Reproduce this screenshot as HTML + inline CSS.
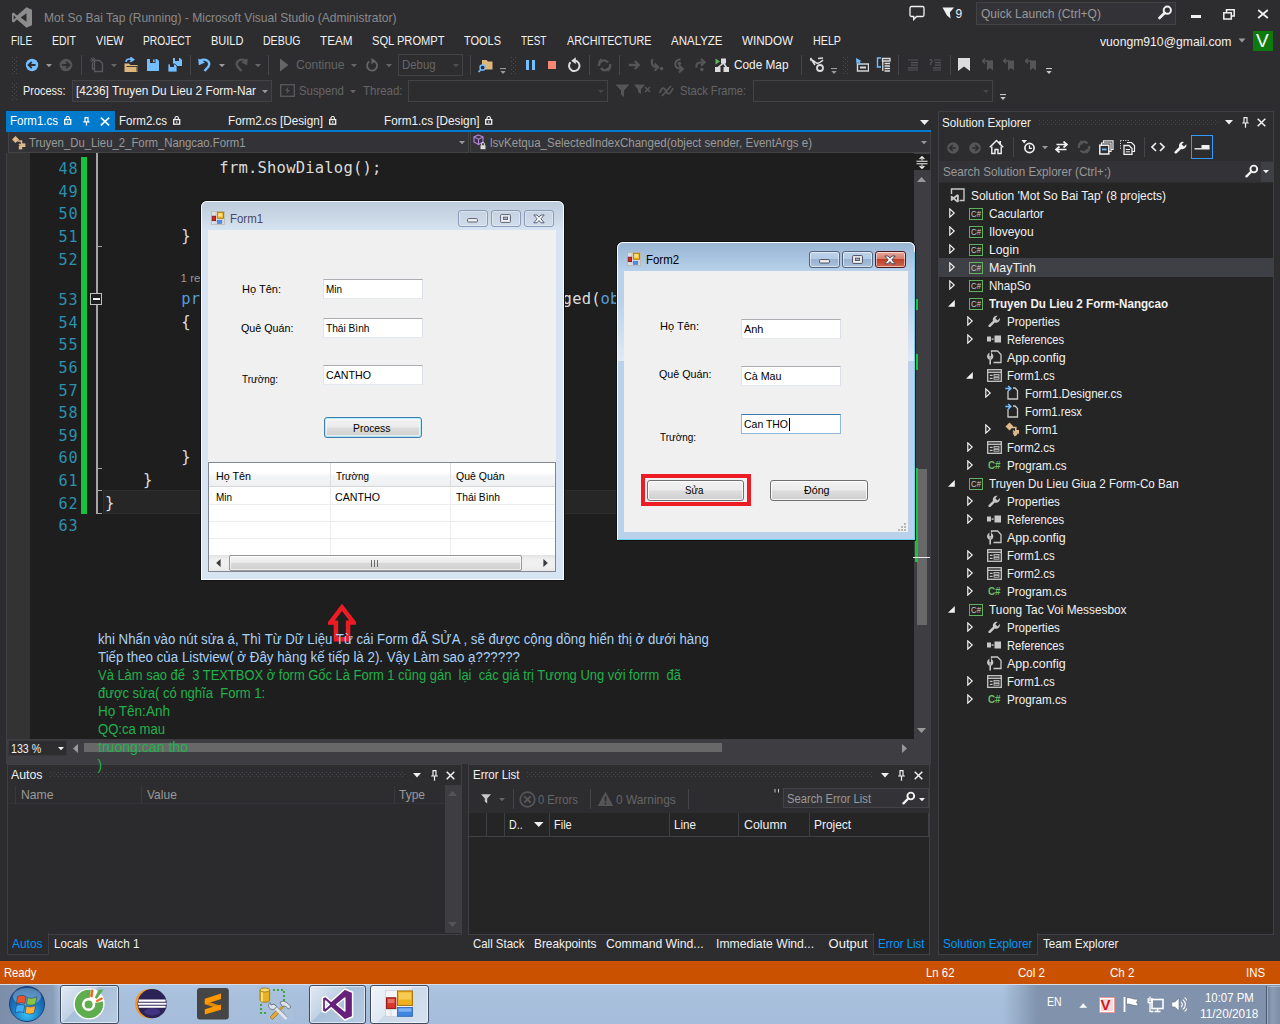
<!DOCTYPE html>
<html><head><meta charset="utf-8"><title>Mot So Bai Tap (Running) - Microsoft Visual Studio (Administrator)</title>
<style>
html,body{margin:0;padding:0;}
body{width:1280px;height:1024px;overflow:hidden;background:#2d2d30;position:relative;font-family:"Liberation Sans",sans-serif;font-size:12px;color:#f1f1f1;}
.r{position:absolute;box-sizing:border-box;display:block;}
.t{position:absolute;white-space:pre;display:block;transform-origin:0 0;}
</style></head><body>
<svg class="r" style="left:12px;top:7px;" width="20.3" height="21" viewBox="0 0 21 21"><path d="M15 0 L21 2.6 V18.4 L15 21 L5.2 12.6 L1.7 15.6 L0 14.6 V6.4 L1.7 5.4 L5.2 8.4 Z M15 6 L9 10.5 L15 15 Z M1.8 8.2 V12.8 L4 10.5 Z" fill="#8c8c8c" fill-rule="evenodd"/></svg>
<span class="t" style="left:44.1px;top:9px;font-size:13.5px;line-height:18px;color:#8a8a8a;transform:scaleX(0.8910);">Mot So Bai Tap (Running) - Microsoft Visual Studio (Administrator)</span>
<svg class="r" style="left:909px;top:5px;" width="16" height="16" viewBox="0 0 16 16"><path d="M2.5 1.5 h11 a1.5 1.5 0 0 1 1.5 1.5 v7 a1.5 1.5 0 0 1 -1.5 1.5 h-6 l-2.8 3 v-3 h-2.2 a1.5 1.5 0 0 1 -1.5 -1.5 v-7 a1.5 1.5 0 0 1 1.5 -1.5z" fill="none" stroke="#f1f1f1" stroke-width="1.3"/></svg>
<svg class="r" style="left:942px;top:7px;" width="13" height="13" viewBox="0 0 13 13"><path d="M0.5 0.5 H12 L7.8 5.5 L8.6 11.5 L5 8.5 Z" fill="#f1f1f1"/></svg>
<span class="t" style="left:955.6px;top:6px;font-size:12px;line-height:16px;color:#f1f1f1;">9</span>
<div class="r" style="left:976px;top:2px;width:200px;height:23px;background:#333337;border:1px solid #434346;"></div>
<span class="t" style="left:981.1px;top:5px;font-size:13px;line-height:17px;color:#999999;transform:scaleX(0.9249);">Quick Launch (Ctrl+Q)</span>
<svg class="r" style="left:1158px;top:5px;" width="15" height="15" viewBox="0 0 15 15"><circle cx="9.3" cy="5.2" r="3.6" fill="none" stroke="#f1f1f1" stroke-width="2"/><path d="M6.8 7.8 L1.5 13" stroke="#f1f1f1" stroke-width="2.6" stroke-linecap="round"/></svg>
<div class="r" style="left:1190.5px;top:14.5px;width:10px;height:3.5px;background:#f1f1f1;"></div>
<svg class="r" style="left:1223px;top:9px;" width="12" height="11" viewBox="0 0 12 11"><path d="M3.5 3 V0.8 H11.2 V7 H8.5" fill="none" stroke="#f1f1f1" stroke-width="1.5"/><rect x="0.8" y="3.8" width="7.5" height="6.2" fill="none" stroke="#f1f1f1" stroke-width="1.5"/></svg>
<svg class="r" style="left:1257px;top:9px;" width="12" height="10" viewBox="0 0 12 10"><path d="M1.2 1 L10.8 9 M10.8 1 L1.2 9" stroke="#f1f1f1" stroke-width="1.7"/></svg>
<span class="t" style="left:11.1px;top:33px;font-size:12.5px;line-height:16px;color:#f1f1f1;transform:scaleX(0.7962);">FILE</span>
<span class="t" style="left:51.6px;top:33px;font-size:12.5px;line-height:16px;color:#f1f1f1;transform:scaleX(0.8421);">EDIT</span>
<span class="t" style="left:95.6px;top:33px;font-size:12.5px;line-height:16px;color:#f1f1f1;transform:scaleX(0.8594);">VIEW</span>
<span class="t" style="left:142.6px;top:33px;font-size:12.5px;line-height:16px;color:#f1f1f1;transform:scaleX(0.8223);">PROJECT</span>
<span class="t" style="left:210.6px;top:33px;font-size:12.5px;line-height:16px;color:#f1f1f1;transform:scaleX(0.8814);">BUILD</span>
<span class="t" style="left:262.6px;top:33px;font-size:12.5px;line-height:16px;color:#f1f1f1;transform:scaleX(0.8427);">DEBUG</span>
<span class="t" style="left:319.6px;top:33px;font-size:12.5px;line-height:16px;color:#f1f1f1;transform:scaleX(0.9353);">TEAM</span>
<span class="t" style="left:371.6px;top:33px;font-size:12.5px;line-height:16px;color:#f1f1f1;transform:scaleX(0.8896);">SQL PROMPT</span>
<span class="t" style="left:464.1px;top:33px;font-size:12.5px;line-height:16px;color:#f1f1f1;transform:scaleX(0.8783);">TOOLS</span>
<span class="t" style="left:520.6px;top:33px;font-size:12.5px;line-height:16px;color:#f1f1f1;transform:scaleX(0.7969);">TEST</span>
<span class="t" style="left:566.6px;top:33px;font-size:12.5px;line-height:16px;color:#f1f1f1;transform:scaleX(0.8633);">ARCHITECTURE</span>
<span class="t" style="left:670.6px;top:33px;font-size:12.5px;line-height:16px;color:#f1f1f1;transform:scaleX(0.9196);">ANALYZE</span>
<span class="t" style="left:742.1px;top:33px;font-size:12.5px;line-height:16px;color:#f1f1f1;transform:scaleX(0.9294);">WINDOW</span>
<span class="t" style="left:812.6px;top:33px;font-size:12.5px;line-height:16px;color:#f1f1f1;transform:scaleX(0.8582);">HELP</span>
<span class="t" style="left:1099.6px;top:33.7px;font-size:13px;line-height:16px;color:#f1f1f1;transform:scaleX(0.9368);">vuongm910@gmail.com</span>
<svg class="r" style="left:1238px;top:38px;" width="8" height="5" viewBox="0 0 8 5"><path d="M0.5 0.5 H7.5 L4 4.5Z" fill="#999"/></svg>
<div class="r" style="left:1253px;top:31px;width:20px;height:20px;background:#0e7a0d;"></div>
<span class="t" style="left:1256.1px;top:31px;font-size:19px;line-height:20px;color:#ffffff;">V</span>
<svg class="r" style="left:12px;top:56.5px;" width="5" height="17" viewBox="0 0 5 17"><rect x="0" y="0" width="1" height="1" fill="#4b4b50"/><rect x="4" y="0" width="1" height="1" fill="#4b4b50"/><rect x="2" y="2" width="1" height="1" fill="#4b4b50"/><rect x="0" y="4" width="1" height="1" fill="#4b4b50"/><rect x="4" y="4" width="1" height="1" fill="#4b4b50"/><rect x="2" y="6" width="1" height="1" fill="#4b4b50"/><rect x="0" y="8" width="1" height="1" fill="#4b4b50"/><rect x="4" y="8" width="1" height="1" fill="#4b4b50"/><rect x="2" y="10" width="1" height="1" fill="#4b4b50"/><rect x="0" y="12" width="1" height="1" fill="#4b4b50"/><rect x="4" y="12" width="1" height="1" fill="#4b4b50"/><rect x="2" y="14" width="1" height="1" fill="#4b4b50"/><rect x="0" y="16" width="1" height="1" fill="#4b4b50"/><rect x="4" y="16" width="1" height="1" fill="#4b4b50"/></svg>
<svg class="r" style="left:12px;top:82.5px;" width="5" height="17" viewBox="0 0 5 17"><rect x="0" y="0" width="1" height="1" fill="#4b4b50"/><rect x="4" y="0" width="1" height="1" fill="#4b4b50"/><rect x="2" y="2" width="1" height="1" fill="#4b4b50"/><rect x="0" y="4" width="1" height="1" fill="#4b4b50"/><rect x="4" y="4" width="1" height="1" fill="#4b4b50"/><rect x="2" y="6" width="1" height="1" fill="#4b4b50"/><rect x="0" y="8" width="1" height="1" fill="#4b4b50"/><rect x="4" y="8" width="1" height="1" fill="#4b4b50"/><rect x="2" y="10" width="1" height="1" fill="#4b4b50"/><rect x="0" y="12" width="1" height="1" fill="#4b4b50"/><rect x="4" y="12" width="1" height="1" fill="#4b4b50"/><rect x="2" y="14" width="1" height="1" fill="#4b4b50"/><rect x="0" y="16" width="1" height="1" fill="#4b4b50"/><rect x="4" y="16" width="1" height="1" fill="#4b4b50"/></svg>
<svg class="r" style="left:25px;top:58px;" width="14" height="14" viewBox="0 0 14 14"><circle cx="7" cy="7" r="6.2" fill="#75beff"/><path d="M10.6 7 H4 M6.8 3.8 L3.6 7 L6.8 10.2" stroke="#2d2d30" stroke-width="1.9" fill="none"/></svg>
<svg class="r" style="left:46px;top:63.5px;" width="6" height="3.5" viewBox="0 0 6 3.5"><path d="M0 0 H6 L3 3.3Z" fill="#999"/></svg>
<svg class="r" style="left:59px;top:58px;" width="14" height="14" viewBox="0 0 14 14"><circle cx="7" cy="7" r="6.3" fill="#555558"/><path d="M3 7 H10 M7.2 3.8 L10.4 7 L7.2 10.2" stroke="#2d2d30" stroke-width="1.9" fill="none"/></svg>
<div class="r" style="left:81px;top:55px;width:1px;height:20px;background:#46464a;"></div>
<svg class="r" style="left:90px;top:57px;" width="14" height="16" viewBox="0 0 14 16"><path d="M4.5 3.5 H9.5 L12.5 6.5 V14.5 H4.5 Z M2.5 6 V12 H4" fill="none" stroke="#5a5a5e" stroke-width="1.3"/><path d="M1 1 L5 5 M5 1 L1 5 M3 0 V6 M0 3 H6" stroke="#5a5a5e" stroke-width="0.9"/></svg>
<svg class="r" style="left:111px;top:63.5px;" width="6" height="3.5" viewBox="0 0 6 3.5"><path d="M0 0 H6 L3 3.3Z" fill="#656565"/></svg>
<svg class="r" style="left:123px;top:57px;" width="16" height="16" viewBox="0 0 16 16"><path d="M1.5 6.5 H6 L7.5 8 H14.5 V15 H1.5 Z" fill="#dcb67a"/><path d="M3.5 9.5 H14 V14.5" fill="none" stroke="#2d2d30" stroke-width="0.9"/><path d="M3 5 C3 2 6 1.5 9 2.5 M7.5 0.3 L10.5 2.7 L7.2 4.8" fill="none" stroke="#75beff" stroke-width="1.7"/></svg>
<svg class="r" style="left:146px;top:58px;" width="14" height="14" viewBox="0 0 14 14"><path d="M1 1 H11 L13 3 V13 H1 Z" fill="#75beff"/><rect x="4" y="1" width="5.5" height="4" fill="#2d2d30"/><rect x="7" y="1.6" width="1.6" height="2.6" fill="#75beff"/></svg>
<svg class="r" style="left:167px;top:57px;" width="16" height="16" viewBox="0 0 16 16"><path d="M6 1 H13 L15 3 V9 H6 Z" fill="#75beff"/><rect x="8" y="1" width="4" height="3" fill="#2d2d30"/><path d="M1 7 H8 L10 9 V15 H1 Z" fill="#75beff" stroke="#2d2d30" stroke-width="0.8"/><rect x="3" y="7" width="4" height="3" fill="#2d2d30"/></svg>
<div class="r" style="left:190px;top:55px;width:1px;height:20px;background:#46464a;"></div>
<svg class="r" style="left:197px;top:57px;" width="16" height="16" viewBox="0 0 16 16"><path d="M3 3.5 C9 1 14 4.5 11.5 9.5 L7.5 14" fill="none" stroke="#75beff" stroke-width="2.4"/><path d="M1.2 1.5 L1.8 8.2 L8 5.6Z" fill="#75beff"/></svg>
<svg class="r" style="left:219px;top:63.5px;" width="6" height="3.5" viewBox="0 0 6 3.5"><path d="M0 0 H6 L3 3.3Z" fill="#999"/></svg>
<svg class="r" style="left:233px;top:57px;" width="16" height="16" viewBox="0 0 16 16"><path d="M13 3.5 C7 1 2 4.5 4.5 9.5 L8.5 14" fill="none" stroke="#555558" stroke-width="2.4"/><path d="M14.8 1.5 L14.2 8.2 L8 5.6Z" fill="#555558"/></svg>
<svg class="r" style="left:255px;top:63.5px;" width="6" height="3.5" viewBox="0 0 6 3.5"><path d="M0 0 H6 L3 3.3Z" fill="#656565"/></svg>
<div class="r" style="left:268px;top:55px;width:1px;height:20px;background:#46464a;"></div>
<svg class="r" style="left:279px;top:58px;" width="10" height="14" viewBox="0 0 10 14"><path d="M1 0.5 V13.5 L9.5 7Z" fill="#656565"/></svg>
<span class="t" style="left:296.1px;top:57px;font-size:13px;line-height:16px;color:#656565;transform:scaleX(0.9327);">Continue</span>
<svg class="r" style="left:351px;top:63.5px;" width="6" height="3.5" viewBox="0 0 6 3.5"><path d="M0 0 H6 L3 3.3Z" fill="#656565"/></svg>
<svg class="r" style="left:365px;top:58px;" width="14" height="15" viewBox="0 0 14 15"><path d="M9.5 3.2 A5 5 0 1 1 4.2 3.5" fill="none" stroke="#656565" stroke-width="1.8"/><path d="M6.3 0 L10.8 3 L6.6 6.2Z" fill="#656565"/></svg>
<svg class="r" style="left:386px;top:63.5px;" width="6" height="3.5" viewBox="0 0 6 3.5"><path d="M0 0 H6 L3 3.3Z" fill="#656565"/></svg>
<div class="r" style="left:398px;top:54px;width:65px;height:22px;background:#2d2d30;border:1px solid #434346;"></div>
<span class="t" style="left:402.1px;top:57px;font-size:13px;line-height:16px;color:#656565;transform:scaleX(0.8758);">Debug</span>
<svg class="r" style="left:453px;top:63.5px;" width="6" height="3.5" viewBox="0 0 6 3.5"><path d="M0 0 H6 L3 3.3Z" fill="#505054"/></svg>
<div class="r" style="left:470px;top:55px;width:1px;height:20px;background:#46464a;"></div>
<svg class="r" style="left:478px;top:57px;" width="15" height="16" viewBox="0 0 15 16"><path d="M4 3 H8.5 L10 4.5 H14.5 V12.5 H4 Z" fill="#dcb67a"/><circle cx="4.6" cy="10.6" r="2.6" fill="#2d2d30" stroke="#75beff" stroke-width="1.4"/><path d="M2.8 12.6 L0.6 15" stroke="#75beff" stroke-width="1.6"/></svg>
<svg class="r" style="left:500px;top:68px;" width="6" height="7" viewBox="0 0 6 7"><rect x="0" y="0" width="6" height="1.1" fill="#999"/><path d="M0.3 3 H5.7 L3 6Z" fill="#999"/></svg>
<svg class="r" style="left:511px;top:56.5px;" width="5" height="17" viewBox="0 0 5 17"><rect x="0" y="0" width="1" height="1" fill="#4b4b50"/><rect x="4" y="0" width="1" height="1" fill="#4b4b50"/><rect x="2" y="2" width="1" height="1" fill="#4b4b50"/><rect x="0" y="4" width="1" height="1" fill="#4b4b50"/><rect x="4" y="4" width="1" height="1" fill="#4b4b50"/><rect x="2" y="6" width="1" height="1" fill="#4b4b50"/><rect x="0" y="8" width="1" height="1" fill="#4b4b50"/><rect x="4" y="8" width="1" height="1" fill="#4b4b50"/><rect x="2" y="10" width="1" height="1" fill="#4b4b50"/><rect x="0" y="12" width="1" height="1" fill="#4b4b50"/><rect x="4" y="12" width="1" height="1" fill="#4b4b50"/><rect x="2" y="14" width="1" height="1" fill="#4b4b50"/><rect x="0" y="16" width="1" height="1" fill="#4b4b50"/><rect x="4" y="16" width="1" height="1" fill="#4b4b50"/></svg>
<div class="r" style="left:525.5px;top:60px;width:3px;height:9.5px;background:#75beff;"></div>
<div class="r" style="left:531.5px;top:60px;width:3px;height:9.5px;background:#75beff;"></div>
<div class="r" style="left:548px;top:61px;width:8px;height:8px;background:#f48771;"></div>
<svg class="r" style="left:567px;top:57px;" width="14" height="16" viewBox="0 0 14 16"><path d="M3.5 5.2 A5.2 5.2 0 1 0 7.5 3.6" fill="none" stroke="#dcdcdc" stroke-width="2"/><path d="M8.8 0.3 L4.2 3.8 L8.8 7Z" fill="#dcdcdc"/></svg>
<div class="r" style="left:589px;top:55px;width:1px;height:20px;background:#46464a;"></div>
<svg class="r" style="left:597px;top:58px;" width="15" height="14" viewBox="0 0 15 14"><path d="M2 8 A5 5 0 0 1 11 4.5 M13 6 A5 5 0 0 1 4 10" fill="none" stroke="#555558" stroke-width="2.4"/><path d="M4 0 L1 4 H6Z M11 14 L14 10 H9Z" fill="#555558"/></svg>
<div class="r" style="left:619px;top:55px;width:1px;height:20px;background:#46464a;"></div>
<svg class="r" style="left:627.5px;top:59px;" width="13" height="12" viewBox="0 0 13 12"><path d="M0.8 6 H10.6 M6.8 2 L10.8 6 L6.8 10" fill="none" stroke="#555558" stroke-width="2.3"/></svg>
<svg class="r" style="left:648.5px;top:58px;" width="15" height="14" viewBox="0 0 15 14"><path d="M3.5 1 C1.5 6 3.5 9.2 8.6 9.2 M5.6 5.6 L9.2 9.2 L5.6 12.6" fill="none" stroke="#555558" stroke-width="2.1"/><circle cx="12.6" cy="10.6" r="1.8" fill="#555558"/></svg>
<svg class="r" style="left:672.5px;top:58px;" width="13" height="15" viewBox="0 0 13 15"><path d="M7.5 1.2 C0.5 2 0.5 11 8 11 M6 7.6 L9.8 11 L6 14.4" fill="none" stroke="#555558" stroke-width="2.1"/><circle cx="6.4" cy="5.6" r="1.8" fill="#555558"/></svg>
<svg class="r" style="left:693.5px;top:58px;" width="13" height="14" viewBox="0 0 13 14"><path d="M2.6 9.6 C1.6 5 4.5 4.2 10 4.2 M7 0.8 L10.6 4.2 L7 7.8" fill="none" stroke="#555558" stroke-width="2.1"/><circle cx="7.8" cy="11.6" r="1.8" fill="#555558"/></svg>
<svg class="r" style="left:714px;top:57px;" width="16" height="16" viewBox="0 0 16 16"><path d="M1.5 1.5 L6 4.5 L1.5 7.5Z" fill="#5cb85c"/><rect x="7" y="1.5" width="5" height="5" fill="#dcdcdc"/><rect x="1" y="10" width="5.5" height="5" fill="#dcdcdc"/><rect x="9.5" y="10" width="5.5" height="5" fill="#dcdcdc"/><path d="M9.5 6 L4 10.5 M9.5 6 L12.5 10.5" stroke="#dcdcdc" stroke-width="1.6"/></svg>
<span class="t" style="left:734.1px;top:57px;font-size:13px;line-height:16px;color:#f1f1f1;transform:scaleX(0.9083);">Code Map</span>
<div class="r" style="left:801px;top:55px;width:1px;height:20px;background:#46464a;"></div>
<svg class="r" style="left:809px;top:57px;" width="16" height="16" viewBox="0 0 16 16"><path d="M1 3 C4 2 5 5 7.5 6 S12 5 14 3 M1.5 1 L6 8 M9 1.5 L14 1" fill="none" stroke="#dcdcdc" stroke-width="1.6"/><circle cx="11" cy="11" r="3" fill="none" stroke="#dcdcdc" stroke-width="1.8"/></svg>
<svg class="r" style="left:830.5px;top:68px;" width="6" height="7" viewBox="0 0 6 7"><rect x="0" y="0" width="6" height="1.1" fill="#999"/><path d="M0.3 3 H5.7 L3 6Z" fill="#999"/></svg>
<svg class="r" style="left:843px;top:56.5px;" width="5" height="17" viewBox="0 0 5 17"><rect x="0" y="0" width="1" height="1" fill="#4b4b50"/><rect x="4" y="0" width="1" height="1" fill="#4b4b50"/><rect x="2" y="2" width="1" height="1" fill="#4b4b50"/><rect x="0" y="4" width="1" height="1" fill="#4b4b50"/><rect x="4" y="4" width="1" height="1" fill="#4b4b50"/><rect x="2" y="6" width="1" height="1" fill="#4b4b50"/><rect x="0" y="8" width="1" height="1" fill="#4b4b50"/><rect x="4" y="8" width="1" height="1" fill="#4b4b50"/><rect x="2" y="10" width="1" height="1" fill="#4b4b50"/><rect x="0" y="12" width="1" height="1" fill="#4b4b50"/><rect x="4" y="12" width="1" height="1" fill="#4b4b50"/><rect x="2" y="14" width="1" height="1" fill="#4b4b50"/><rect x="0" y="16" width="1" height="1" fill="#4b4b50"/><rect x="4" y="16" width="1" height="1" fill="#4b4b50"/></svg>
<svg class="r" style="left:855px;top:57px;" width="14" height="15" viewBox="0 0 14 15"><rect x="2.5" y="7" width="11" height="7" fill="none" stroke="#dcdcdc" stroke-width="1.4"/><rect x="5" y="9.5" width="6" height="2" fill="#dcdcdc"/><path d="M1 1 L1.5 7 L3.2 5.3 L5 8 L6.3 7.2 L4.6 4.6 L6.8 4.2Z" fill="#75beff"/></svg>
<svg class="r" style="left:876px;top:57px;" width="15" height="15" viewBox="0 0 15 15"><path d="M5 1 H1.5 V10 H5" fill="none" stroke="#75beff" stroke-width="1.4"/><path d="M6.5 1.5 H14 V4 H6.5Z M8.5 6.5 H14 M8.5 9 H14 M8.5 11.5 H14 M8.5 14 H14 M6.8 4 V14" fill="none" stroke="#dcdcdc" stroke-width="1.3"/></svg>
<div class="r" style="left:898px;top:55px;width:1px;height:20px;background:#46464a;"></div>
<svg class="r" style="left:907px;top:59px;" width="12" height="12" viewBox="0 0 12 12"><path d="M1 1 H11 M4 3.6 H11 M4 6.2 H11 M1 8.8 H11 M1 11 H11" stroke="#555558" stroke-width="1.2"/></svg>
<svg class="r" style="left:929px;top:59px;" width="13" height="12" viewBox="0 0 13 12"><path d="M5 1 H12 M6 3.6 H12 M6 6.2 H12 M4 8.8 H12 M4 11 H12" stroke="#555558" stroke-width="1.2"/><path d="M0.5 1 C3 0 4 2 1.5 4.5 V6" fill="none" stroke="#555558" stroke-width="1.3"/></svg>
<div class="r" style="left:950px;top:55px;width:1px;height:20px;background:#46464a;"></div>
<svg class="r" style="left:958px;top:58px;" width="12" height="13" viewBox="0 0 12 13"><path d="M0 0 H12 V13 L6 8.5 L0 13Z" fill="#dcdcdc"/></svg>
<svg class="r" style="left:982px;top:58px;" width="13" height="13" viewBox="0 0 13 13"><path d="M5 2.5 H11 V12.5 L8 10 L5 12.5Z" fill="#555558"/><path d="M0 3 H6 M3 0.5 L0.5 3 L3 5.5" fill="none" stroke="#555558" stroke-width="1.5"/></svg>
<svg class="r" style="left:1003px;top:58px;" width="13" height="13" viewBox="0 0 13 13"><path d="M5 2.5 H11 V12.5 L8 10 L5 12.5Z" fill="#555558"/><path d="M0 3 H6 M3 0.5 L0.5 3 L3 5.5" fill="none" stroke="#555558" stroke-width="1.5"/></svg>
<svg class="r" style="left:1025px;top:58px;" width="13" height="13" viewBox="0 0 13 13"><path d="M5 2.5 H11 V12.5 L8 10 L5 12.5Z" fill="#555558"/><path d="M0 3 H6 M3 0.5 L0.5 3 L3 5.5" fill="none" stroke="#555558" stroke-width="1.5"/></svg>
<svg class="r" style="left:1046px;top:68px;" width="6" height="7" viewBox="0 0 6 7"><rect x="0" y="0" width="6" height="1.1" fill="#c8c8c8"/><path d="M0.3 3 H5.7 L3 6Z" fill="#c8c8c8"/></svg>
<span class="t" style="left:23.1px;top:83px;font-size:13px;line-height:16px;color:#f1f1f1;transform:scaleX(0.8395);">Process:</span>
<div class="r" style="left:72px;top:80px;width:200px;height:22px;background:#333337;border:1px solid #434346;"></div>
<span class="t" style="left:76.1px;top:83px;font-size:13px;line-height:16px;color:#f1f1f1;transform:scaleX(0.9091);">[4236] Truyen Du Lieu 2 Form-Nar</span>
<svg class="r" style="left:261.5px;top:89.5px;" width="6" height="3.5" viewBox="0 0 6 3.5"><path d="M0 0 H6 L3 3.3Z" fill="#999"/></svg>
<svg class="r" style="left:280px;top:84px;" width="15" height="13" viewBox="0 0 15 13"><rect x="0.7" y="0.7" width="13.6" height="11.6" fill="none" stroke="#5a5a5e" stroke-width="1.3"/><path d="M8.5 2.5 L5 6.8 H7.5 L6 10.5 L10 6 H7.5Z" fill="#5a5a5e"/></svg>
<span class="t" style="left:299.1px;top:83px;font-size:13px;line-height:16px;color:#656565;transform:scaleX(0.8759);">Suspend</span>
<svg class="r" style="left:349.5px;top:89.5px;" width="6" height="3.5" viewBox="0 0 6 3.5"><path d="M0 0 H6 L3 3.3Z" fill="#656565"/></svg>
<span class="t" style="left:362.6px;top:83px;font-size:13px;line-height:16px;color:#656565;transform:scaleX(0.8827);">Thread:</span>
<div class="r" style="left:408px;top:80px;width:200px;height:22px;background:#2d2d30;border:1px solid #434346;"></div>
<svg class="r" style="left:597.5px;top:89.5px;" width="6" height="3.5" viewBox="0 0 6 3.5"><path d="M0 0 H6 L3 3.3Z" fill="#46464a"/></svg>
<svg class="r" style="left:615px;top:84px;" width="15" height="14" viewBox="0 0 15 14"><path d="M0.5 0.5 H14.5 L9 6.5 V13 L6 10.5 V6.5Z" fill="#555558"/></svg>
<svg class="r" style="left:634px;top:84px;" width="18" height="14" viewBox="0 0 18 14"><path d="M0 0.5 H11 L7 5.5 V10 L4 8 V5.5Z" fill="#555558"/><path d="M11 3 L16 8 M11 8 L16 3" stroke="#555558" stroke-width="1.6"/></svg>
<svg class="r" style="left:659px;top:85px;" width="15" height="12" viewBox="0 0 15 12"><path d="M0.5 8 C3 2 5 2 7 6 S11 10 14 3 M3 11 L12 1" fill="none" stroke="#555558" stroke-width="1.8"/></svg>
<span class="t" style="left:680.1px;top:83px;font-size:13px;line-height:16px;color:#656565;transform:scaleX(0.8544);">Stack Frame:</span>
<div class="r" style="left:753px;top:80px;width:240px;height:22px;background:#2d2d30;border:1px solid #434346;"></div>
<svg class="r" style="left:983px;top:89.5px;" width="6" height="3.5" viewBox="0 0 6 3.5"><path d="M0 0 H6 L3 3.3Z" fill="#46464a"/></svg>
<svg class="r" style="left:1000px;top:94px;" width="6" height="7" viewBox="0 0 6 7"><rect x="0" y="0" width="6" height="1.1" fill="#c8c8c8"/><path d="M0.3 3 H5.7 L3 6Z" fill="#c8c8c8"/></svg>
<div class="r" style="left:6px;top:111px;width:109px;height:20px;background:#007acc;"></div>
<div class="r" style="left:6px;top:130px;width:925px;height:2px;background:#007acc;"></div>
<span class="t" style="left:10.1px;top:113px;font-size:13px;line-height:16px;color:#ffffff;transform:scaleX(0.8868);">Form1.cs</span>
<svg class="r" style="left:64px;top:116px;" width="7.5" height="9" viewBox="0 0 7.5 9"><rect x="0.7" y="3.6" width="6" height="4.6" fill="none" stroke="#ffffff" stroke-width="1.3"/><path d="M2 3.4 V2 A1.7 1.5 0 0 1 5.4 2 V3.4" fill="none" stroke="#ffffff" stroke-width="1.1"/><rect x="3.2" y="5.2" width="1.1" height="1.6" fill="#ffffff"/></svg>
<svg class="r" style="left:83px;top:117px;" width="7" height="9" viewBox="0 0 7 9"><path d="M1.5 0.6 H5.5 M2 0.6 V4.6 M5 0.6 V4.6 M0.3 4.8 H6.7 M3.5 4.9 V8.4" stroke="#fff" stroke-width="1.2" fill="none"/></svg>
<svg class="r" style="left:100px;top:116.5px;" width="10" height="9" viewBox="0 0 10 9"><path d="M0.8 0.6 L9.2 8.4 M9.2 0.6 L0.8 8.4" stroke="#fff" stroke-width="1.5"/></svg>
<span class="t" style="left:119.1px;top:113px;font-size:13px;line-height:16px;color:#f1f1f1;transform:scaleX(0.8868);">Form2.cs</span>
<svg class="r" style="left:173px;top:116px;" width="7.5" height="9" viewBox="0 0 7.5 9"><rect x="0.7" y="3.6" width="6" height="4.6" fill="none" stroke="#f1f1f1" stroke-width="1.3"/><path d="M2 3.4 V2 A1.7 1.5 0 0 1 5.4 2 V3.4" fill="none" stroke="#f1f1f1" stroke-width="1.1"/><rect x="3.2" y="5.2" width="1.1" height="1.6" fill="#f1f1f1"/></svg>
<span class="t" style="left:227.6px;top:113px;font-size:13px;line-height:16px;color:#f1f1f1;transform:scaleX(0.9005);">Form2.cs [Design]</span>
<svg class="r" style="left:329px;top:116px;" width="7.5" height="9" viewBox="0 0 7.5 9"><rect x="0.7" y="3.6" width="6" height="4.6" fill="none" stroke="#f1f1f1" stroke-width="1.3"/><path d="M2 3.4 V2 A1.7 1.5 0 0 1 5.4 2 V3.4" fill="none" stroke="#f1f1f1" stroke-width="1.1"/><rect x="3.2" y="5.2" width="1.1" height="1.6" fill="#f1f1f1"/></svg>
<span class="t" style="left:383.6px;top:113px;font-size:13px;line-height:16px;color:#f1f1f1;transform:scaleX(0.9052);">Form1.cs [Design]</span>
<svg class="r" style="left:485px;top:116px;" width="7.5" height="9" viewBox="0 0 7.5 9"><rect x="0.7" y="3.6" width="6" height="4.6" fill="none" stroke="#f1f1f1" stroke-width="1.3"/><path d="M2 3.4 V2 A1.7 1.5 0 0 1 5.4 2 V3.4" fill="none" stroke="#f1f1f1" stroke-width="1.1"/><rect x="3.2" y="5.2" width="1.1" height="1.6" fill="#f1f1f1"/></svg>
<svg class="r" style="left:919.5px;top:119.5px;" width="9" height="5" viewBox="0 0 9 5"><path d="M0 0 H9 L4.5 5Z" fill="#f1f1f1"/></svg>
<div class="r" style="left:8px;top:132px;width:461px;height:21px;background:#333337;border:1px solid #434346;border-top:0;"></div>
<div class="r" style="left:470px;top:132px;width:461px;height:21px;background:#333337;border:1px solid #434346;border-top:0;"></div>
<svg class="r" style="left:11px;top:135px;" width="15" height="15" viewBox="0 0 15 15"><path d="M1 4.5 L4.5 1 L8 4.5 L4.5 8Z" fill="#e0b98a"/><path d="M6.5 6 H10.5 V11 H13 M8 9 L10.5 11.5" fill="none" stroke="#e0b98a" stroke-width="1.6"/><rect x="10.8" y="8.4" width="3.6" height="3.6" fill="#e0b98a"/><rect x="7.8" y="11" width="3.4" height="3.4" fill="#e0b98a"/></svg>
<span class="t" style="left:28.6px;top:135px;font-size:12.5px;line-height:16px;color:#999999;transform:scaleX(0.9078);">Truyen_Du_Lieu_2_Form_Nangcao.Form1</span>
<svg class="r" style="left:459px;top:141px;" width="6" height="3.5" viewBox="0 0 6 3.5"><path d="M0 0 H6 L3 3.3Z" fill="#999"/></svg>
<svg class="r" style="left:473px;top:134px;" width="14" height="16" viewBox="0 0 14 16"><path d="M5.5 1 L10 3 V8 L5.5 10.5 L1 8 V3Z M1 3 L5.5 5.2 L10 3 M5.5 5.2 V10.5" fill="none" stroke="#b180d7" stroke-width="1.2"/><rect x="7.5" y="11.2" width="5" height="4" fill="#dcdcdc"/><path d="M8.6 11 V9.8 A1.4 1.2 0 0 1 11.4 9.8 V11" fill="none" stroke="#dcdcdc" stroke-width="1"/></svg>
<span class="t" style="left:490.1px;top:135px;font-size:12.5px;line-height:16px;color:#999999;transform:scaleX(0.9213);">lsvKetqua_SelectedIndexChanged(object sender, EventArgs e)</span>
<svg class="r" style="left:921px;top:141px;" width="6" height="3.5" viewBox="0 0 6 3.5"><path d="M0 0 H6 L3 3.3Z" fill="#999"/></svg>
<div class="r" style="left:6px;top:153px;width:1px;height:611px;background:#3f3f46;"></div>
<div class="r" style="left:7px;top:153px;width:23px;height:585.5px;background:#333333;"></div>
<div class="r" style="left:30px;top:153px;width:884px;height:585.5px;background:#1e1e1e;"></div>
<div class="r" style="left:103px;top:490px;width:811px;height:23.5px;background:#262626;border:1px solid #2e2e2e;"></div>
<div class="r" style="left:80.5px;top:157px;width:6.7px;height:357px;background:#17c33c;"></div>
<div class="r" style="left:96.3px;top:153px;width:1.5px;height:361px;background:#a5a5a5;"></div>
<div class="r" style="left:96.3px;top:246px;width:6px;height:1.3px;background:#a5a5a5;"></div>
<div class="r" style="left:96.3px;top:468px;width:6px;height:1.3px;background:#a5a5a5;"></div>
<div class="r" style="left:96.3px;top:490px;width:6px;height:1.3px;background:#a5a5a5;"></div>
<div class="r" style="left:96.3px;top:513px;width:6px;height:1.3px;background:#a5a5a5;"></div>
<div class="r" style="left:90.3px;top:293px;width:12px;height:12px;background:#1e1e1e;border:1.3px solid #c0c0c0;"></div>
<div class="r" style="left:93px;top:298.3px;width:7px;height:2px;background:#f1f1f1;"></div>
<span class="t" style="left:58.5px;top:158.2px;font-size:15.2px;line-height:22px;color:#2b91af;letter-spacing:0.759px;font-family:'DejaVu Sans Mono','Liberation Mono',monospace;">48</span>
<span class="t" style="left:58.5px;top:180.8px;font-size:15.2px;line-height:22px;color:#2b91af;letter-spacing:0.759px;font-family:'DejaVu Sans Mono','Liberation Mono',monospace;">49</span>
<span class="t" style="left:58.5px;top:203.4px;font-size:15.2px;line-height:22px;color:#2b91af;letter-spacing:0.759px;font-family:'DejaVu Sans Mono','Liberation Mono',monospace;">50</span>
<span class="t" style="left:58.5px;top:226px;font-size:15.2px;line-height:22px;color:#2b91af;letter-spacing:0.759px;font-family:'DejaVu Sans Mono','Liberation Mono',monospace;">51</span>
<span class="t" style="left:58.5px;top:248.6px;font-size:15.2px;line-height:22px;color:#2b91af;letter-spacing:0.759px;font-family:'DejaVu Sans Mono','Liberation Mono',monospace;">52</span>
<span class="t" style="left:58.5px;top:289.2px;font-size:15.2px;line-height:22px;color:#2b91af;letter-spacing:0.759px;font-family:'DejaVu Sans Mono','Liberation Mono',monospace;">53</span>
<span class="t" style="left:58.5px;top:311.8px;font-size:15.2px;line-height:22px;color:#2b91af;letter-spacing:0.759px;font-family:'DejaVu Sans Mono','Liberation Mono',monospace;">54</span>
<span class="t" style="left:58.5px;top:334.4px;font-size:15.2px;line-height:22px;color:#2b91af;letter-spacing:0.759px;font-family:'DejaVu Sans Mono','Liberation Mono',monospace;">55</span>
<span class="t" style="left:58.5px;top:357px;font-size:15.2px;line-height:22px;color:#2b91af;letter-spacing:0.759px;font-family:'DejaVu Sans Mono','Liberation Mono',monospace;">56</span>
<span class="t" style="left:58.5px;top:379.6px;font-size:15.2px;line-height:22px;color:#2b91af;letter-spacing:0.759px;font-family:'DejaVu Sans Mono','Liberation Mono',monospace;">57</span>
<span class="t" style="left:58.5px;top:402.2px;font-size:15.2px;line-height:22px;color:#2b91af;letter-spacing:0.759px;font-family:'DejaVu Sans Mono','Liberation Mono',monospace;">58</span>
<span class="t" style="left:58.5px;top:424.8px;font-size:15.2px;line-height:22px;color:#2b91af;letter-spacing:0.759px;font-family:'DejaVu Sans Mono','Liberation Mono',monospace;">59</span>
<span class="t" style="left:58.5px;top:447.4px;font-size:15.2px;line-height:22px;color:#2b91af;letter-spacing:0.759px;font-family:'DejaVu Sans Mono','Liberation Mono',monospace;">60</span>
<span class="t" style="left:58.5px;top:470px;font-size:15.2px;line-height:22px;color:#2b91af;letter-spacing:0.759px;font-family:'DejaVu Sans Mono','Liberation Mono',monospace;">61</span>
<span class="t" style="left:58.5px;top:492.6px;font-size:15.2px;line-height:22px;color:#2b91af;letter-spacing:0.759px;font-family:'DejaVu Sans Mono','Liberation Mono',monospace;">62</span>
<span class="t" style="left:58.5px;top:515.2px;font-size:15.2px;line-height:22px;color:#2b91af;letter-spacing:0.759px;font-family:'DejaVu Sans Mono','Liberation Mono',monospace;">63</span>
<span class="t" style="left:219.36px;top:157.2px;font-size:15.5px;line-height:22px;color:#dcdcdc;letter-spacing:0.210px;font-family:'DejaVu Sans Mono','Liberation Mono',monospace;">frm.ShowDialog();</span>
<span class="t" style="left:181.24px;top:225px;font-size:15.5px;line-height:22px;color:#dcdcdc;font-family:'DejaVu Sans Mono','Liberation Mono',monospace;">}</span>
<span class="t" style="left:181.24px;top:288.2px;font-size:15.5px;line-height:22px;color:#569cd6;letter-spacing:0.231px;font-family:'DejaVu Sans Mono','Liberation Mono',monospace;">private</span>
<span class="t" style="left:257.48px;top:288.2px;font-size:15.5px;line-height:22px;color:#569cd6;letter-spacing:0.264px;font-family:'DejaVu Sans Mono','Liberation Mono',monospace;">void</span>
<span class="t" style="left:305.13px;top:288.2px;font-size:15.5px;line-height:22px;color:#dcdcdc;letter-spacing:0.205px;font-family:'DejaVu Sans Mono','Liberation Mono',monospace;">lsvKetqua_SelectedIndexChanged(</span>
<span class="t" style="left:600.56px;top:288.2px;font-size:15.5px;line-height:22px;color:#569cd6;letter-spacing:0.238px;font-family:'DejaVu Sans Mono','Liberation Mono',monospace;">object</span>
<span class="t" style="left:667.27px;top:288.2px;font-size:15.5px;line-height:22px;color:#dcdcdc;letter-spacing:0.231px;font-family:'DejaVu Sans Mono','Liberation Mono',monospace;">sender,</span>
<span class="t" style="left:743.51px;top:288.2px;font-size:15.5px;line-height:22px;color:#4ec9b0;letter-spacing:0.223px;font-family:'DejaVu Sans Mono','Liberation Mono',monospace;">EventArgs</span>
<span class="t" style="left:838.81px;top:288.2px;font-size:15.5px;line-height:22px;color:#dcdcdc;letter-spacing:0.396px;font-family:'DejaVu Sans Mono','Liberation Mono',monospace;">e)</span>
<span class="t" style="left:181.24px;top:310.8px;font-size:15.5px;line-height:22px;color:#dcdcdc;font-family:'DejaVu Sans Mono','Liberation Mono',monospace;">{</span>
<span class="t" style="left:181.24px;top:446.4px;font-size:15.5px;line-height:22px;color:#dcdcdc;font-family:'DejaVu Sans Mono','Liberation Mono',monospace;">}</span>
<span class="t" style="left:143.12px;top:469px;font-size:15.5px;line-height:22px;color:#dcdcdc;font-family:'DejaVu Sans Mono','Liberation Mono',monospace;">}</span>
<span class="t" style="left:105px;top:491.6px;font-size:15.5px;line-height:22px;color:#dcdcdc;font-family:'DejaVu Sans Mono','Liberation Mono',monospace;">}</span>
<span class="t" style="left:180.6px;top:270px;font-size:11.5px;line-height:16px;color:#999999;">1 reference</span>
<div class="r" style="left:914px;top:153px;width:17px;height:586px;background:#3e3e42;"></div>
<div class="r" style="left:914px;top:154px;width:16px;height:16px;background:#1e1e1e;"></div>
<svg class="r" style="left:916px;top:156px;" width="12" height="13" viewBox="0 0 12 13"><path d="M0.5 5.3 H11.5 M0.5 7.7 H11.5" stroke="#f1f1f1" stroke-width="1.1"/><path d="M6 0.8 V4.5 M6 8.5 V12.2 M3.6 3 L6 0.6 L8.4 3 M3.6 10 L6 12.4 L8.4 10" fill="none" stroke="#f1f1f1" stroke-width="1.1"/></svg>
<svg class="r" style="left:917px;top:177px;" width="9" height="5" viewBox="0 0 9 5"><path d="M0 5 H9 L4.5 0Z" fill="#999"/></svg>
<div class="r" style="left:917px;top:469px;width:9.5px;height:156px;background:#686868;"></div>
<div class="r" style="left:915.5px;top:299px;width:2px;height:11px;background:#17c33c;"></div>
<div class="r" style="left:915.5px;top:354px;width:2px;height:16px;background:#17c33c;"></div>
<div class="r" style="left:914.5px;top:467.5px;width:3.5px;height:94px;background:#17c33c;"></div>
<div class="r" style="left:913px;top:556.5px;width:17px;height:1.6px;background:#e8e8e8;"></div>
<svg class="r" style="left:917px;top:728px;" width="9" height="5" viewBox="0 0 9 5"><path d="M0 0 H9 L4.5 5Z" fill="#999"/></svg>
<div class="r" style="left:7px;top:738.5px;width:924px;height:25.5px;background:#3e3e42;"></div>
<div class="r" style="left:7.5px;top:739.5px;width:59px;height:16px;background:#2d2d30;border:1px solid #39393d;"></div>
<span class="t" style="left:10.6px;top:740.5px;font-size:13px;line-height:16px;color:#f1f1f1;transform:scaleX(0.8190);">133 %</span>
<svg class="r" style="left:58px;top:747px;" width="6" height="3.5" viewBox="0 0 6 3.5"><path d="M0 0 H6 L3 3.3Z" fill="#f1f1f1"/></svg>
<svg class="r" style="left:73px;top:743.5px;" width="5" height="9" viewBox="0 0 5 9"><path d="M5 0 V9 L0 4.5Z" fill="#999"/></svg>
<div class="r" style="left:84px;top:743px;width:638px;height:9px;background:#686868;"></div>
<svg class="r" style="left:902px;top:743.5px;" width="5" height="9" viewBox="0 0 5 9"><path d="M0 0 V9 L5 4.5Z" fill="#999"/></svg>
<svg class="r" style="left:325px;top:601px;" width="34" height="42" viewBox="0 0 34 42"><path d="M17 2.8 L31 21 V23.8 H25.3 V40.5 H8.7 V23.8 H3 V21 Z M17 10 L9.8 19.4 H13.2 V36 H20.8 V19.4 H24.2 Z" fill="#ed1c24" fill-rule="evenodd"/></svg>
<div class="r" style="left:937.5px;top:111px;width:336.5px;height:824px;background:#2d2d30;border:1px solid #3f3f46;"></div>
<span class="t" style="left:941.6px;top:114px;font-size:13px;line-height:17px;color:#f1f1f1;transform:scaleX(0.8990);">Solution Explorer</span>
<svg class="r" style="left:1039px;top:120px;" width="179" height="5" viewBox="0 0 179 5"><path d="M0 0.5 H179" stroke="#46464a" stroke-width="1" stroke-dasharray="1 3"/><path d="M2 2.5 H179" stroke="#46464a" stroke-width="1" stroke-dasharray="1 3"/><path d="M0 4.5 H179" stroke="#46464a" stroke-width="1" stroke-dasharray="1 3"/></svg>
<svg class="r" style="left:1225px;top:120.3px;" width="8" height="4.5" viewBox="0 0 8 4.5"><path d="M0 0 H8 L4 4.5Z" fill="#f1f1f1"/></svg>
<svg class="r" style="left:1242px;top:117.3px;" width="7" height="11" viewBox="0 0 7 11"><path d="M1.5 0.6 H5.5 M2 0.6 V5.8 M5 0.6 V5.8 M0.2 6 H6.8 M3.5 6 V10.8" stroke="#f1f1f1" stroke-width="1.2" fill="none"/></svg>
<svg class="r" style="left:1257.3px;top:117.8px;" width="9" height="9" viewBox="0 0 9 9"><path d="M0.7 0.7 L8.3 8.3 M8.3 0.7 L0.7 8.3" stroke="#f1f1f1" stroke-width="1.5"/></svg>
<svg class="r" style="left:947px;top:141.5px;" width="12" height="12" viewBox="0 0 12 12"><circle cx="6" cy="6" r="5.8" fill="#555558"/><path d="M8.8 6 H3 M5.8 3 L2.8 6 L5.8 9" stroke="#2d2d30" stroke-width="1.7" fill="none"/></svg>
<svg class="r" style="left:969px;top:141.5px;" width="12" height="12" viewBox="0 0 12 12"><circle cx="6" cy="6" r="5.8" fill="#555558"/><path d="M3.2 6 H9 M6.2 3 L9.2 6 L6.2 9" stroke="#2d2d30" stroke-width="1.7" fill="none"/></svg>
<svg class="r" style="left:989px;top:139px;" width="16" height="16" viewBox="0 0 16 16"><path d="M0.8 8.2 L7.5 1.5 L14.2 8.2" fill="none" stroke="#f1f1f1" stroke-width="1.5"/><path d="M2.8 7.5 V14.5 H6 V10.5 H9 V14.5 H12.2 V7.5" fill="none" stroke="#f1f1f1" stroke-width="1.4"/><rect x="10.2" y="2" width="1.8" height="3.5" fill="#f1f1f1"/></svg>
<div class="r" style="left:1012.5px;top:137px;width:1px;height:20px;background:#46464a;"></div>
<svg class="r" style="left:1021px;top:139px;" width="15" height="15" viewBox="0 0 15 15"><circle cx="8.5" cy="9" r="4.6" fill="none" stroke="#f1f1f1" stroke-width="1.7"/><path d="M8.5 6.2 V9.3 H11" fill="none" stroke="#f1f1f1" stroke-width="1.2"/><path d="M0.5 1 H6 L3.2 4.5Z" fill="#f1f1f1"/></svg>
<svg class="r" style="left:1042px;top:146px;" width="6" height="3.5" viewBox="0 0 6 3.5"><path d="M0 0 H6 L3 3.3Z" fill="#999"/></svg>
<svg class="r" style="left:1055px;top:141px;" width="13" height="12" viewBox="0 0 13 12"><path d="M1.5 3.5 H12 M8.5 0.5 L12 3.5 L8.5 6.5 M11.5 8.5 H1 M4.5 5.5 L1 8.5 L4.5 11.5" fill="none" stroke="#f1f1f1" stroke-width="1.7"/></svg>
<svg class="r" style="left:1077px;top:140px;" width="14" height="14" viewBox="0 0 14 14"><path d="M2 8 A5 5 0 0 1 10.5 3.5 M12 6 A5 5 0 0 1 3.5 10.5" fill="none" stroke="#555558" stroke-width="2.4"/><path d="M4 0 L1 4.5 H6.5Z M10 14 L13 9.5 H7.5Z" fill="#555558"/></svg>
<svg class="r" style="left:1099px;top:140px;" width="15" height="15" viewBox="0 0 15 15"><path d="M4.5 3 V0.8 H14 V9.5 H11.5 M2.5 5 V3 H12 V11.5 H10" fill="none" stroke="#f1f1f1" stroke-width="1.2"/><rect x="0.8" y="5.2" width="9" height="8.8" fill="none" stroke="#f1f1f1" stroke-width="1.5"/><rect x="3" y="8.6" width="4.6" height="1.7" fill="#75beff"/></svg>
<svg class="r" style="left:1120px;top:139px;" width="16" height="16" viewBox="0 0 16 16"><path d="M0.5 1.5 H10 M0.5 1.5 V10" stroke="#f1f1f1" stroke-width="1" stroke-dasharray="1 1.4" fill="none"/><path d="M7 3.5 H11.5 L14.5 6.5 V12.5 H12" fill="none" stroke="#f1f1f1" stroke-width="1.2"/><path d="M4 6.5 H9 L12 9.5 V15.3 H4Z" fill="none" stroke="#f1f1f1" stroke-width="1.3"/><path d="M5.8 10.5 H10 M5.8 12.8 H10" stroke="#f1f1f1" stroke-width="1"/></svg>
<div class="r" style="left:1143.5px;top:137px;width:1px;height:20px;background:#46464a;"></div>
<svg class="r" style="left:1151px;top:142px;" width="14" height="10" viewBox="0 0 14 10"><path d="M5 1 L1 5 L5 9 M9 1 L13 5 L9 9" fill="none" stroke="#f1f1f1" stroke-width="1.6"/></svg>
<svg class="r" style="left:1174px;top:140.5px;" width="13" height="13" viewBox="0 0 13 13"><path d="M12.3 3.2 L9.9 5.6 L7.6 3.3 L10 0.9 A4 4 0 0 0 5.2 6 L0.8 10.4 A1.3 1.3 0 0 0 2.7 12.3 L7.1 7.9 A4 4 0 0 0 12.3 3.2Z" fill="#f1f1f1"/></svg>
<div class="r" style="left:1191px;top:135px;width:22px;height:23.5px;background:#2d2d30;border:1px solid #3399ff;"></div>
<svg class="r" style="left:1194px;top:144px;" width="16" height="6" viewBox="0 0 16 6"><path d="M0.5 4.8 H15.5" stroke="#f1f1f1" stroke-width="1.4"/><rect x="7.5" y="1" width="8" height="3.8" fill="#f1f1f1"/></svg>
<div class="r" style="left:938.5px;top:161px;width:334.5px;height:20.5px;background:#333337;"></div>
<div class="r" style="left:1261px;top:161.5px;width:12px;height:20px;background:#3f3f46;"></div>
<span class="t" style="left:942.6px;top:163px;font-size:13px;line-height:17px;color:#999999;transform:scaleX(0.8960);">Search Solution Explorer (Ctrl+;)</span>
<svg class="r" style="left:1245px;top:164px;" width="14" height="14" viewBox="0 0 14 14"><circle cx="8.8" cy="5" r="3.4" fill="none" stroke="#f1f1f1" stroke-width="1.9"/><path d="M6.3 7.5 L1.5 12.3" stroke="#f1f1f1" stroke-width="2.4" stroke-linecap="round"/></svg>
<svg class="r" style="left:1263.3px;top:170px;" width="6" height="3.5" viewBox="0 0 6 3.5"><path d="M0 0 H6 L3 3.3Z" fill="#f1f1f1"/></svg>
<div class="r" style="left:938.5px;top:183px;width:334.5px;height:751px;background:#252526;"></div>
<div class="r" style="left:938.5px;top:258px;width:334.5px;height:18.5px;background:#3f3f46;"></div>
<svg class="r" style="left:950.3px;top:187.5px;" width="15" height="15" viewBox="0 0 15 15"><path d="M1.5 6 V1 H14 V12.5 H9.5" fill="none" stroke="#c8c8c8" stroke-width="1.4"/><path d="M7.2 6.2 L8.8 7 V13.7 L7.2 14.5 L3.6 11.6 L1.6 13 L0.8 12.6 V8.1 L1.6 7.7 L3.6 9.1Z M7 8.8 L5 10.35 L7 11.9Z" fill="#c8c8c8" fill-rule="evenodd"/></svg>
<span class="t" style="left:970.6px;top:186.5px;font-size:13px;line-height:17px;color:#f1f1f1;transform:scaleX(0.9193);">Solution &#x27;Mot So Bai Tap&#x27; (8 projects)</span>
<svg class="r" style="left:948.5px;top:208px;" width="7" height="10" viewBox="0 0 7 10"><path d="M0.8 0.9 L5.2 5 L0.8 9.1Z" fill="none" stroke="#f1f1f1" stroke-width="1.2"/></svg>
<div class="r" style="left:969px;top:207.7px;width:14px;height:12.3px;background:transparent;border:1px solid #5fb15c;"></div>
<span class="t" style="left:970.6px;top:208.2px;font-size:9.5px;line-height:11px;color:#c8c8c8;transform:scaleX(0.8247);">C#</span>
<span class="t" style="left:988.6px;top:204.5px;font-size:13px;line-height:17px;color:#f1f1f1;transform:scaleX(0.9133);">Caculartor</span>
<svg class="r" style="left:948.5px;top:226px;" width="7" height="10" viewBox="0 0 7 10"><path d="M0.8 0.9 L5.2 5 L0.8 9.1Z" fill="none" stroke="#f1f1f1" stroke-width="1.2"/></svg>
<div class="r" style="left:969px;top:225.7px;width:14px;height:12.3px;background:transparent;border:1px solid #5fb15c;"></div>
<span class="t" style="left:970.6px;top:226.2px;font-size:9.5px;line-height:11px;color:#c8c8c8;transform:scaleX(0.8247);">C#</span>
<span class="t" style="left:988.6px;top:222.5px;font-size:13px;line-height:17px;color:#f1f1f1;transform:scaleX(0.9220);">Iloveyou</span>
<svg class="r" style="left:948.5px;top:244px;" width="7" height="10" viewBox="0 0 7 10"><path d="M0.8 0.9 L5.2 5 L0.8 9.1Z" fill="none" stroke="#f1f1f1" stroke-width="1.2"/></svg>
<div class="r" style="left:969px;top:243.7px;width:14px;height:12.3px;background:transparent;border:1px solid #5fb15c;"></div>
<span class="t" style="left:970.6px;top:244.2px;font-size:9.5px;line-height:11px;color:#c8c8c8;transform:scaleX(0.8247);">C#</span>
<span class="t" style="left:988.6px;top:240.5px;font-size:13px;line-height:17px;color:#f1f1f1;transform:scaleX(0.9417);">Login</span>
<svg class="r" style="left:948.5px;top:262px;" width="7" height="10" viewBox="0 0 7 10"><path d="M0.8 0.9 L5.2 5 L0.8 9.1Z" fill="none" stroke="#f1f1f1" stroke-width="1.2"/></svg>
<div class="r" style="left:969px;top:261.7px;width:14px;height:12.3px;background:transparent;border:1px solid #5fb15c;"></div>
<span class="t" style="left:970.6px;top:262.2px;font-size:9.5px;line-height:11px;color:#c8c8c8;transform:scaleX(0.8247);">C#</span>
<span class="t" style="left:988.6px;top:258.5px;font-size:13px;line-height:17px;color:#f1f1f1;transform:scaleX(0.9519);">MayTinh</span>
<svg class="r" style="left:948.5px;top:280px;" width="7" height="10" viewBox="0 0 7 10"><path d="M0.8 0.9 L5.2 5 L0.8 9.1Z" fill="none" stroke="#f1f1f1" stroke-width="1.2"/></svg>
<div class="r" style="left:969px;top:279.7px;width:14px;height:12.3px;background:transparent;border:1px solid #5fb15c;"></div>
<span class="t" style="left:970.6px;top:280.2px;font-size:9.5px;line-height:11px;color:#c8c8c8;transform:scaleX(0.8247);">C#</span>
<span class="t" style="left:988.6px;top:276.5px;font-size:13px;line-height:17px;color:#f1f1f1;transform:scaleX(0.8894);">NhapSo</span>
<svg class="r" style="left:948.3px;top:300px;" width="7" height="7" viewBox="0 0 7 7"><path d="M6.8 0 V6.8 H0Z" fill="#f1f1f1"/></svg>
<div class="r" style="left:969px;top:297.7px;width:14px;height:12.3px;background:transparent;border:1px solid #5fb15c;"></div>
<span class="t" style="left:970.6px;top:298.2px;font-size:9.5px;line-height:11px;color:#c8c8c8;transform:scaleX(0.8247);">C#</span>
<span class="t" style="left:988.6px;top:294.5px;font-size:13px;line-height:17px;color:#f1f1f1;transform:scaleX(0.8954);font-weight:bold;">Truyen Du Lieu 2 Form-Nangcao</span>
<svg class="r" style="left:966.5px;top:316px;" width="7" height="10" viewBox="0 0 7 10"><path d="M0.8 0.9 L5.2 5 L0.8 9.1Z" fill="none" stroke="#f1f1f1" stroke-width="1.2"/></svg>
<svg class="r" style="left:988px;top:314.5px;" width="12.5" height="12.5" viewBox="0 0 13 13"><path d="M12.3 3.2 L9.9 5.6 L7.6 3.3 L10 0.9 A4 4 0 0 0 5.2 6 L0.8 10.4 A1.3 1.3 0 0 0 2.7 12.3 L7.1 7.9 A4 4 0 0 0 12.3 3.2Z" fill="#c8c8c8"/></svg>
<span class="t" style="left:1006.6px;top:312.5px;font-size:13px;line-height:17px;color:#f1f1f1;transform:scaleX(0.8928);">Properties</span>
<svg class="r" style="left:966.5px;top:334px;" width="7" height="10" viewBox="0 0 7 10"><path d="M0.8 0.9 L5.2 5 L0.8 9.1Z" fill="none" stroke="#f1f1f1" stroke-width="1.2"/></svg>
<svg class="r" style="left:987px;top:335px;" width="15" height="8" viewBox="0 0 15 8"><rect x="0" y="1.5" width="4" height="5" fill="#c8c8c8"/><rect x="4.6" y="3.4" width="2" height="1.4" fill="#c8c8c8"/><rect x="7.5" y="0.5" width="6.5" height="7" fill="#c8c8c8"/></svg>
<span class="t" style="left:1006.6px;top:330.5px;font-size:13px;line-height:17px;color:#f1f1f1;transform:scaleX(0.8571);">References</span>
<svg class="r" style="left:987px;top:349.5px;" width="15" height="15" viewBox="0 0 15 15"><path d="M4.5 2.5 V1 H10.5 L14 4.5 V12.5 H6.5" fill="none" stroke="#c8c8c8" stroke-width="1.3"/><path d="M3.2 14.5 V9.2 A2.8 2.8 0 0 1 1.6 4.6 V7 H4.8 V4.6 A2.8 2.8 0 0 1 3.2 9.2" fill="none" stroke="#c8c8c8" stroke-width="1.6"/></svg>
<span class="t" style="left:1006.6px;top:348.5px;font-size:13px;line-height:17px;color:#f1f1f1;transform:scaleX(0.9564);">App.config</span>
<svg class="r" style="left:966.3px;top:372px;" width="7" height="7" viewBox="0 0 7 7"><path d="M6.8 0 V6.8 H0Z" fill="#f1f1f1"/></svg>
<svg class="r" style="left:987px;top:368.5px;" width="15" height="13" viewBox="0 0 15 13"><rect x="0.7" y="0.7" width="13.6" height="11.6" fill="none" stroke="#c8c8c8" stroke-width="1.3"/><path d="M0.7 3.3 H14.3" stroke="#c8c8c8" stroke-width="1.3"/><path d="M2.8 6.3 H5.6 M2.8 9.3 H5.6" stroke="#c8c8c8" stroke-width="1.3"/><rect x="7" y="5.4" width="5" height="1.8" fill="none" stroke="#c8c8c8" stroke-width="0.9"/><rect x="7" y="8.4" width="5" height="1.8" fill="none" stroke="#c8c8c8" stroke-width="0.9"/></svg>
<span class="t" style="left:1006.6px;top:366.5px;font-size:13px;line-height:17px;color:#f1f1f1;transform:scaleX(0.8813);">Form1.cs</span>
<svg class="r" style="left:984.5px;top:388px;" width="7" height="10" viewBox="0 0 7 10"><path d="M0.8 0.9 L5.2 5 L0.8 9.1Z" fill="none" stroke="#f1f1f1" stroke-width="1.2"/></svg>
<svg class="r" style="left:1005px;top:385px;" width="15" height="15" viewBox="0 0 15 15"><path d="M3 6 V14 H12.5 V5.5 L10 3 H8" fill="none" stroke="#c8c8c8" stroke-width="1.3"/><path d="M0.3 3.5 H5.5 M3.2 1 L5.8 3.5 L3.2 6" fill="none" stroke="#75beff" stroke-width="1.6"/></svg>
<span class="t" style="left:1024.6px;top:384.5px;font-size:13px;line-height:17px;color:#f1f1f1;transform:scaleX(0.8889);">Form1.Designer.cs</span>
<svg class="r" style="left:1005px;top:403px;" width="15" height="15" viewBox="0 0 15 15"><path d="M3 6 V14 H12.5 V5.5 L10 3 H8" fill="none" stroke="#c8c8c8" stroke-width="1.3"/><path d="M0.3 3.5 H5.5 M3.2 1 L5.8 3.5 L3.2 6" fill="none" stroke="#75beff" stroke-width="1.6"/></svg>
<span class="t" style="left:1024.6px;top:402.5px;font-size:13px;line-height:17px;color:#f1f1f1;transform:scaleX(0.8669);">Form1.resx</span>
<svg class="r" style="left:984.5px;top:424px;" width="7" height="10" viewBox="0 0 7 10"><path d="M0.8 0.9 L5.2 5 L0.8 9.1Z" fill="none" stroke="#f1f1f1" stroke-width="1.2"/></svg>
<svg class="r" style="left:1005px;top:421.5px;" width="15" height="15" viewBox="0 0 15 15"><path d="M0.5 4.5 L4.5 0.5 L8.5 4.5 L4.5 8.5Z" fill="#e0b98a"/><path d="M6.8 5.5 H10.8 V10.2 H12.6 M8.2 8.6 L10.5 11" fill="none" stroke="#e0b98a" stroke-width="1.6"/><path d="M10.2 8 H14 V11.8 H10.2Z M7.6 10.8 L10.4 9.8 L12.4 12.8 L9.6 14.6Z" fill="#e0b98a"/></svg>
<span class="t" style="left:1024.6px;top:420.5px;font-size:13px;line-height:17px;color:#f1f1f1;transform:scaleX(0.8771);">Form1</span>
<svg class="r" style="left:966.5px;top:442px;" width="7" height="10" viewBox="0 0 7 10"><path d="M0.8 0.9 L5.2 5 L0.8 9.1Z" fill="none" stroke="#f1f1f1" stroke-width="1.2"/></svg>
<svg class="r" style="left:987px;top:440.5px;" width="15" height="13" viewBox="0 0 15 13"><rect x="0.7" y="0.7" width="13.6" height="11.6" fill="none" stroke="#c8c8c8" stroke-width="1.3"/><path d="M0.7 3.3 H14.3" stroke="#c8c8c8" stroke-width="1.3"/><path d="M2.8 6.3 H5.6 M2.8 9.3 H5.6" stroke="#c8c8c8" stroke-width="1.3"/><rect x="7" y="5.4" width="5" height="1.8" fill="none" stroke="#c8c8c8" stroke-width="0.9"/><rect x="7" y="8.4" width="5" height="1.8" fill="none" stroke="#c8c8c8" stroke-width="0.9"/></svg>
<span class="t" style="left:1006.6px;top:438.5px;font-size:13px;line-height:17px;color:#f1f1f1;transform:scaleX(0.8813);">Form2.cs</span>
<svg class="r" style="left:966.5px;top:460px;" width="7" height="10" viewBox="0 0 7 10"><path d="M0.8 0.9 L5.2 5 L0.8 9.1Z" fill="none" stroke="#f1f1f1" stroke-width="1.2"/></svg>
<span class="t" style="left:988.1px;top:459px;font-size:10.5px;line-height:13px;color:#6dbf67;transform:scaleX(0.9346);font-weight:bold;">C#</span>
<span class="t" style="left:1006.6px;top:456.5px;font-size:13px;line-height:17px;color:#f1f1f1;transform:scaleX(0.8977);">Program.cs</span>
<svg class="r" style="left:948.3px;top:480px;" width="7" height="7" viewBox="0 0 7 7"><path d="M6.8 0 V6.8 H0Z" fill="#f1f1f1"/></svg>
<div class="r" style="left:969px;top:477.7px;width:14px;height:12.3px;background:transparent;border:1px solid #5fb15c;"></div>
<span class="t" style="left:970.6px;top:478.2px;font-size:9.5px;line-height:11px;color:#c8c8c8;transform:scaleX(0.8247);">C#</span>
<span class="t" style="left:988.6px;top:474.5px;font-size:13px;line-height:17px;color:#f1f1f1;transform:scaleX(0.8953);">Truyen Du Lieu Giua 2 Form-Co Ban</span>
<svg class="r" style="left:966.5px;top:496px;" width="7" height="10" viewBox="0 0 7 10"><path d="M0.8 0.9 L5.2 5 L0.8 9.1Z" fill="none" stroke="#f1f1f1" stroke-width="1.2"/></svg>
<svg class="r" style="left:988px;top:494.5px;" width="12.5" height="12.5" viewBox="0 0 13 13"><path d="M12.3 3.2 L9.9 5.6 L7.6 3.3 L10 0.9 A4 4 0 0 0 5.2 6 L0.8 10.4 A1.3 1.3 0 0 0 2.7 12.3 L7.1 7.9 A4 4 0 0 0 12.3 3.2Z" fill="#c8c8c8"/></svg>
<span class="t" style="left:1006.6px;top:492.5px;font-size:13px;line-height:17px;color:#f1f1f1;transform:scaleX(0.8928);">Properties</span>
<svg class="r" style="left:966.5px;top:514px;" width="7" height="10" viewBox="0 0 7 10"><path d="M0.8 0.9 L5.2 5 L0.8 9.1Z" fill="none" stroke="#f1f1f1" stroke-width="1.2"/></svg>
<svg class="r" style="left:987px;top:515px;" width="15" height="8" viewBox="0 0 15 8"><rect x="0" y="1.5" width="4" height="5" fill="#c8c8c8"/><rect x="4.6" y="3.4" width="2" height="1.4" fill="#c8c8c8"/><rect x="7.5" y="0.5" width="6.5" height="7" fill="#c8c8c8"/></svg>
<span class="t" style="left:1006.6px;top:510.5px;font-size:13px;line-height:17px;color:#f1f1f1;transform:scaleX(0.8571);">References</span>
<svg class="r" style="left:987px;top:529.5px;" width="15" height="15" viewBox="0 0 15 15"><path d="M4.5 2.5 V1 H10.5 L14 4.5 V12.5 H6.5" fill="none" stroke="#c8c8c8" stroke-width="1.3"/><path d="M3.2 14.5 V9.2 A2.8 2.8 0 0 1 1.6 4.6 V7 H4.8 V4.6 A2.8 2.8 0 0 1 3.2 9.2" fill="none" stroke="#c8c8c8" stroke-width="1.6"/></svg>
<span class="t" style="left:1006.6px;top:528.5px;font-size:13px;line-height:17px;color:#f1f1f1;transform:scaleX(0.9564);">App.config</span>
<svg class="r" style="left:966.5px;top:550px;" width="7" height="10" viewBox="0 0 7 10"><path d="M0.8 0.9 L5.2 5 L0.8 9.1Z" fill="none" stroke="#f1f1f1" stroke-width="1.2"/></svg>
<svg class="r" style="left:987px;top:548.5px;" width="15" height="13" viewBox="0 0 15 13"><rect x="0.7" y="0.7" width="13.6" height="11.6" fill="none" stroke="#c8c8c8" stroke-width="1.3"/><path d="M0.7 3.3 H14.3" stroke="#c8c8c8" stroke-width="1.3"/><path d="M2.8 6.3 H5.6 M2.8 9.3 H5.6" stroke="#c8c8c8" stroke-width="1.3"/><rect x="7" y="5.4" width="5" height="1.8" fill="none" stroke="#c8c8c8" stroke-width="0.9"/><rect x="7" y="8.4" width="5" height="1.8" fill="none" stroke="#c8c8c8" stroke-width="0.9"/></svg>
<span class="t" style="left:1006.6px;top:546.5px;font-size:13px;line-height:17px;color:#f1f1f1;transform:scaleX(0.8813);">Form1.cs</span>
<svg class="r" style="left:966.5px;top:568px;" width="7" height="10" viewBox="0 0 7 10"><path d="M0.8 0.9 L5.2 5 L0.8 9.1Z" fill="none" stroke="#f1f1f1" stroke-width="1.2"/></svg>
<svg class="r" style="left:987px;top:566.5px;" width="15" height="13" viewBox="0 0 15 13"><rect x="0.7" y="0.7" width="13.6" height="11.6" fill="none" stroke="#c8c8c8" stroke-width="1.3"/><path d="M0.7 3.3 H14.3" stroke="#c8c8c8" stroke-width="1.3"/><path d="M2.8 6.3 H5.6 M2.8 9.3 H5.6" stroke="#c8c8c8" stroke-width="1.3"/><rect x="7" y="5.4" width="5" height="1.8" fill="none" stroke="#c8c8c8" stroke-width="0.9"/><rect x="7" y="8.4" width="5" height="1.8" fill="none" stroke="#c8c8c8" stroke-width="0.9"/></svg>
<span class="t" style="left:1006.6px;top:564.5px;font-size:13px;line-height:17px;color:#f1f1f1;transform:scaleX(0.8813);">Form2.cs</span>
<svg class="r" style="left:966.5px;top:586px;" width="7" height="10" viewBox="0 0 7 10"><path d="M0.8 0.9 L5.2 5 L0.8 9.1Z" fill="none" stroke="#f1f1f1" stroke-width="1.2"/></svg>
<span class="t" style="left:988.1px;top:585px;font-size:10.5px;line-height:13px;color:#6dbf67;transform:scaleX(0.9346);font-weight:bold;">C#</span>
<span class="t" style="left:1006.6px;top:582.5px;font-size:13px;line-height:17px;color:#f1f1f1;transform:scaleX(0.8977);">Program.cs</span>
<svg class="r" style="left:948.3px;top:606px;" width="7" height="7" viewBox="0 0 7 7"><path d="M6.8 0 V6.8 H0Z" fill="#f1f1f1"/></svg>
<div class="r" style="left:969px;top:603.7px;width:14px;height:12.3px;background:transparent;border:1px solid #5fb15c;"></div>
<span class="t" style="left:970.6px;top:604.2px;font-size:9.5px;line-height:11px;color:#c8c8c8;transform:scaleX(0.8247);">C#</span>
<span class="t" style="left:988.6px;top:600.5px;font-size:13px;line-height:17px;color:#f1f1f1;transform:scaleX(0.9106);">Tuong Tac Voi Messesbox</span>
<svg class="r" style="left:966.5px;top:622px;" width="7" height="10" viewBox="0 0 7 10"><path d="M0.8 0.9 L5.2 5 L0.8 9.1Z" fill="none" stroke="#f1f1f1" stroke-width="1.2"/></svg>
<svg class="r" style="left:988px;top:620.5px;" width="12.5" height="12.5" viewBox="0 0 13 13"><path d="M12.3 3.2 L9.9 5.6 L7.6 3.3 L10 0.9 A4 4 0 0 0 5.2 6 L0.8 10.4 A1.3 1.3 0 0 0 2.7 12.3 L7.1 7.9 A4 4 0 0 0 12.3 3.2Z" fill="#c8c8c8"/></svg>
<span class="t" style="left:1006.6px;top:618.5px;font-size:13px;line-height:17px;color:#f1f1f1;transform:scaleX(0.8928);">Properties</span>
<svg class="r" style="left:966.5px;top:640px;" width="7" height="10" viewBox="0 0 7 10"><path d="M0.8 0.9 L5.2 5 L0.8 9.1Z" fill="none" stroke="#f1f1f1" stroke-width="1.2"/></svg>
<svg class="r" style="left:987px;top:641px;" width="15" height="8" viewBox="0 0 15 8"><rect x="0" y="1.5" width="4" height="5" fill="#c8c8c8"/><rect x="4.6" y="3.4" width="2" height="1.4" fill="#c8c8c8"/><rect x="7.5" y="0.5" width="6.5" height="7" fill="#c8c8c8"/></svg>
<span class="t" style="left:1006.6px;top:636.5px;font-size:13px;line-height:17px;color:#f1f1f1;transform:scaleX(0.8571);">References</span>
<svg class="r" style="left:987px;top:655.5px;" width="15" height="15" viewBox="0 0 15 15"><path d="M4.5 2.5 V1 H10.5 L14 4.5 V12.5 H6.5" fill="none" stroke="#c8c8c8" stroke-width="1.3"/><path d="M3.2 14.5 V9.2 A2.8 2.8 0 0 1 1.6 4.6 V7 H4.8 V4.6 A2.8 2.8 0 0 1 3.2 9.2" fill="none" stroke="#c8c8c8" stroke-width="1.6"/></svg>
<span class="t" style="left:1006.6px;top:654.5px;font-size:13px;line-height:17px;color:#f1f1f1;transform:scaleX(0.9564);">App.config</span>
<svg class="r" style="left:966.5px;top:676px;" width="7" height="10" viewBox="0 0 7 10"><path d="M0.8 0.9 L5.2 5 L0.8 9.1Z" fill="none" stroke="#f1f1f1" stroke-width="1.2"/></svg>
<svg class="r" style="left:987px;top:674.5px;" width="15" height="13" viewBox="0 0 15 13"><rect x="0.7" y="0.7" width="13.6" height="11.6" fill="none" stroke="#c8c8c8" stroke-width="1.3"/><path d="M0.7 3.3 H14.3" stroke="#c8c8c8" stroke-width="1.3"/><path d="M2.8 6.3 H5.6 M2.8 9.3 H5.6" stroke="#c8c8c8" stroke-width="1.3"/><rect x="7" y="5.4" width="5" height="1.8" fill="none" stroke="#c8c8c8" stroke-width="0.9"/><rect x="7" y="8.4" width="5" height="1.8" fill="none" stroke="#c8c8c8" stroke-width="0.9"/></svg>
<span class="t" style="left:1006.6px;top:672.5px;font-size:13px;line-height:17px;color:#f1f1f1;transform:scaleX(0.8813);">Form1.cs</span>
<svg class="r" style="left:966.5px;top:694px;" width="7" height="10" viewBox="0 0 7 10"><path d="M0.8 0.9 L5.2 5 L0.8 9.1Z" fill="none" stroke="#f1f1f1" stroke-width="1.2"/></svg>
<span class="t" style="left:988.1px;top:693px;font-size:10.5px;line-height:13px;color:#6dbf67;transform:scaleX(0.9346);font-weight:bold;">C#</span>
<span class="t" style="left:1006.6px;top:690.5px;font-size:13px;line-height:17px;color:#f1f1f1;transform:scaleX(0.8977);">Program.cs</span>
<div class="r" style="left:937.5px;top:933px;width:100.5px;height:22px;background:#252526;border:1px solid #3f3f46;border-top:0;"></div>
<span class="t" style="left:942.6px;top:935px;font-size:13px;line-height:17px;color:#0097fb;transform:scaleX(0.9040);">Solution Explorer</span>
<span class="t" style="left:1042.6px;top:935px;font-size:13px;line-height:17px;color:#f1f1f1;transform:scaleX(0.9001);">Team Explorer</span>
<div class="r" style="left:6.5px;top:764px;width:455.5px;height:171px;background:#2b2b2d;border:1px solid #3f3f46;"></div>
<div class="r" style="left:7.5px;top:765px;width:453.5px;height:20px;background:#2d2d30;"></div>
<span class="t" style="left:10.6px;top:766px;font-size:13px;line-height:17px;color:#f1f1f1;transform:scaleX(0.9474);">Autos</span>
<svg class="r" style="left:50px;top:772px;" width="355" height="5" viewBox="0 0 355 5"><path d="M0 0.5 H355" stroke="#46464a" stroke-width="1" stroke-dasharray="1 3"/><path d="M2 2.5 H355" stroke="#46464a" stroke-width="1" stroke-dasharray="1 3"/><path d="M0 4.5 H355" stroke="#46464a" stroke-width="1" stroke-dasharray="1 3"/></svg>
<svg class="r" style="left:413px;top:773px;" width="8" height="4.5" viewBox="0 0 8 4.5"><path d="M0 0 H8 L4 4.5Z" fill="#f1f1f1"/></svg>
<svg class="r" style="left:430.5px;top:770px;" width="7" height="11" viewBox="0 0 7 11"><path d="M1.5 0.6 H5.5 M2 0.6 V5.8 M5 0.6 V5.8 M0.2 6 H6.8 M3.5 6 V10.8" stroke="#f1f1f1" stroke-width="1.2" fill="none"/></svg>
<svg class="r" style="left:445.5px;top:770.5px;" width="9" height="9" viewBox="0 0 9 9"><path d="M0.7 0.7 L8.3 8.3 M8.3 0.7 L0.7 8.3" stroke="#f1f1f1" stroke-width="1.5"/></svg>
<div class="r" style="left:7.5px;top:785px;width:437px;height:19px;background:#2d2d30;border-bottom:1px solid #333337;"></div>
<div class="r" style="left:15.4px;top:786px;width:1px;height:18px;background:#38383c;"></div>
<div class="r" style="left:141.4px;top:786px;width:1px;height:18px;background:#38383c;"></div>
<div class="r" style="left:393.7px;top:786px;width:1px;height:18px;background:#38383c;"></div>
<span class="t" style="left:20.9px;top:786.3px;font-size:13px;line-height:17px;color:#999999;transform:scaleX(0.9386);">Name</span>
<span class="t" style="left:146.6px;top:786.3px;font-size:13px;line-height:17px;color:#999999;transform:scaleX(0.9240);">Value</span>
<span class="t" style="left:399.2px;top:786.3px;font-size:13px;line-height:17px;color:#999999;transform:scaleX(0.9244);">Type</span>
<div class="r" style="left:444.5px;top:785px;width:16.5px;height:148px;background:#3e3e42;"></div>
<svg class="r" style="left:448px;top:791px;" width="9" height="5" viewBox="0 0 9 5"><path d="M0 5 H9 L4.5 0Z" fill="#555558"/></svg>
<svg class="r" style="left:448px;top:922px;" width="9" height="5" viewBox="0 0 9 5"><path d="M0 0 H9 L4.5 5Z" fill="#555558"/></svg>
<div class="r" style="left:6.5px;top:933px;width:42px;height:22px;background:#2b2b2d;border:1px solid #3f3f46;border-top:0;"></div>
<span class="t" style="left:11.6px;top:935px;font-size:13px;line-height:17px;color:#0097fb;transform:scaleX(0.9173);">Autos</span>
<span class="t" style="left:53.6px;top:935px;font-size:13px;line-height:17px;color:#f1f1f1;transform:scaleX(0.8904);">Locals</span>
<span class="t" style="left:96.6px;top:935px;font-size:13px;line-height:17px;color:#f1f1f1;transform:scaleX(0.8995);">Watch 1</span>
<div class="r" style="left:468px;top:764px;width:462px;height:171px;background:#2d2d30;border:1px solid #3f3f46;"></div>
<span class="t" style="left:472.6px;top:766.3px;font-size:13px;line-height:17px;color:#f1f1f1;transform:scaleX(0.8815);">Error List</span>
<svg class="r" style="left:527px;top:772px;" width="346" height="5" viewBox="0 0 346 5"><path d="M0 0.5 H346" stroke="#46464a" stroke-width="1" stroke-dasharray="1 3"/><path d="M2 2.5 H346" stroke="#46464a" stroke-width="1" stroke-dasharray="1 3"/><path d="M0 4.5 H346" stroke="#46464a" stroke-width="1" stroke-dasharray="1 3"/></svg>
<svg class="r" style="left:880.7px;top:773px;" width="8" height="4.5" viewBox="0 0 8 4.5"><path d="M0 0 H8 L4 4.5Z" fill="#f1f1f1"/></svg>
<svg class="r" style="left:898px;top:770px;" width="7" height="11" viewBox="0 0 7 11"><path d="M1.5 0.6 H5.5 M2 0.6 V5.8 M5 0.6 V5.8 M0.2 6 H6.8 M3.5 6 V10.8" stroke="#f1f1f1" stroke-width="1.2" fill="none"/></svg>
<svg class="r" style="left:913.8px;top:770.5px;" width="9" height="9" viewBox="0 0 9 9"><path d="M0.7 0.7 L8.3 8.3 M8.3 0.7 L0.7 8.3" stroke="#f1f1f1" stroke-width="1.5"/></svg>
<svg class="r" style="left:480.5px;top:794px;" width="10" height="10" viewBox="0 0 10 10"><path d="M0 0.3 H10 L6.2 4.6 V9.6 L3.8 7.6 V4.6Z" fill="#c8c8c8"/></svg>
<svg class="r" style="left:499px;top:797.5px;" width="6" height="3.5" viewBox="0 0 6 3.5"><path d="M0 0 H6 L3 3.3Z" fill="#656565"/></svg>
<div class="r" style="left:512.5px;top:789px;width:1px;height:20px;background:#46464a;"></div>
<div class="r" style="left:590px;top:789px;width:1px;height:20px;background:#46464a;"></div>
<div class="r" style="left:688px;top:789px;width:1px;height:20px;background:#46464a;"></div>
<svg class="r" style="left:519px;top:790.5px;" width="17" height="17" viewBox="0 0 17 17"><circle cx="8.5" cy="8.5" r="7.3" fill="none" stroke="#555558" stroke-width="1.7"/><path d="M5.2 5.2 L11.8 11.8 M11.8 5.2 L5.2 11.8" stroke="#555558" stroke-width="2"/></svg>
<span class="t" style="left:538.3px;top:791px;font-size:13px;line-height:17px;color:#656565;transform:scaleX(0.8605);">0 Errors</span>
<svg class="r" style="left:597px;top:790.5px;" width="17" height="16" viewBox="0 0 17 16"><path d="M8.5 0.8 L16.3 15 H0.7Z" fill="#555558"/><path d="M8.5 5.5 V10.5 M8.5 11.8 V13.6" stroke="#2d2d30" stroke-width="1.8"/></svg>
<span class="t" style="left:616.3px;top:791px;font-size:13px;line-height:17px;color:#656565;transform:scaleX(0.9165);">0 Warnings</span>
<svg class="r" style="left:774px;top:789px;" width="6" height="4" viewBox="0 0 6 4"><path d="M1 0 V3.5 M4.5 0 V3.5" stroke="#c8c8c8" stroke-width="1"/></svg>
<div class="r" style="left:782.5px;top:788px;width:146.5px;height:20px;background:#333337;border:1px solid #434346;"></div>
<span class="t" style="left:786.9px;top:789.5px;font-size:13px;line-height:17px;color:#999999;transform:scaleX(0.8615);">Search Error List</span>
<svg class="r" style="left:901.5px;top:791px;" width="14" height="14" viewBox="0 0 14 14"><circle cx="8.8" cy="5" r="3.4" fill="none" stroke="#f1f1f1" stroke-width="1.9"/><path d="M6.3 7.5 L1.5 12.3" stroke="#f1f1f1" stroke-width="2.4" stroke-linecap="round"/></svg>
<svg class="r" style="left:919px;top:797.5px;" width="6" height="3.5" viewBox="0 0 6 3.5"><path d="M0 0 H6 L3 3.3Z" fill="#f1f1f1"/></svg>
<div class="r" style="left:469px;top:813px;width:460px;height:121px;background:#252526;"></div>
<div class="r" style="left:469px;top:836px;width:460px;height:1px;background:#3f3f46;"></div>
<div class="r" style="left:485.5px;top:813px;width:1px;height:23px;background:#3f3f46;"></div>
<div class="r" style="left:503.9px;top:813px;width:1px;height:23px;background:#3f3f46;"></div>
<div class="r" style="left:548.5px;top:813px;width:1px;height:23px;background:#3f3f46;"></div>
<div class="r" style="left:668.5px;top:813px;width:1px;height:23px;background:#3f3f46;"></div>
<div class="r" style="left:738.2px;top:813px;width:1px;height:23px;background:#3f3f46;"></div>
<div class="r" style="left:808.7px;top:813px;width:1px;height:23px;background:#3f3f46;"></div>
<div class="r" style="left:928.2px;top:813px;width:1px;height:23px;background:#3f3f46;"></div>
<span class="t" style="left:509.1px;top:816px;font-size:13px;line-height:17px;color:#f1f1f1;transform:scaleX(0.8180);">D..</span>
<svg class="r" style="left:534px;top:822px;" width="9.5" height="5" viewBox="0 0 9.5 5"><path d="M0 0 H9.5 L4.75 5Z" fill="#f1f1f1"/></svg>
<span class="t" style="left:554.1px;top:816px;font-size:13px;line-height:17px;color:#f1f1f1;transform:scaleX(0.8429);">File</span>
<span class="t" style="left:674.1px;top:816px;font-size:13px;line-height:17px;color:#f1f1f1;transform:scaleX(0.8934);">Line</span>
<span class="t" style="left:743.6px;top:816px;font-size:13px;line-height:17px;color:#f1f1f1;transform:scaleX(0.9497);">Column</span>
<span class="t" style="left:813.6px;top:816px;font-size:13px;line-height:17px;color:#f1f1f1;transform:scaleX(0.9185);">Project</span>
<span class="t" style="left:472.6px;top:935px;font-size:13px;line-height:17px;color:#f1f1f1;transform:scaleX(0.8785);">Call Stack</span>
<span class="t" style="left:533.6px;top:935px;font-size:13px;line-height:17px;color:#f1f1f1;transform:scaleX(0.9107);">Breakpoints</span>
<span class="t" style="left:605.6px;top:935px;font-size:13px;line-height:17px;color:#f1f1f1;transform:scaleX(0.9375);">Command Wind...</span>
<span class="t" style="left:716.1px;top:935px;font-size:13px;line-height:17px;color:#f1f1f1;transform:scaleX(0.9356);">Immediate Wind...</span>
<span class="t" style="left:828.6px;top:935px;font-size:13px;line-height:17px;color:#f1f1f1;transform:scaleX(1.0000);">Output</span>
<div class="r" style="left:872.5px;top:933px;width:57.5px;height:22px;background:#252526;border:1px solid #3f3f46;border-top:0;"></div>
<span class="t" style="left:877.6px;top:935px;font-size:13px;line-height:17px;color:#0097fb;transform:scaleX(0.8815);">Error List</span>
<div class="r" style="left:0px;top:961px;width:1280px;height:23.5px;background:#ca5100;"></div>
<span class="t" style="left:3.6px;top:963.5px;font-size:13px;line-height:17px;color:#ffffff;transform:scaleX(0.8638);">Ready</span>
<span class="t" style="left:925.6px;top:963.5px;font-size:13px;line-height:17px;color:#ffffff;transform:scaleX(0.8769);">Ln 62</span>
<span class="t" style="left:1018.1px;top:963.5px;font-size:13px;line-height:17px;color:#ffffff;transform:scaleX(0.8889);">Col 2</span>
<span class="t" style="left:1109.6px;top:963.5px;font-size:13px;line-height:17px;color:#ffffff;transform:scaleX(0.8909);">Ch 2</span>
<span class="t" style="left:1245.6px;top:963.5px;font-size:13px;line-height:17px;color:#ffffff;transform:scaleX(0.8786);">INS</span>
<div class="r" style="left:0px;top:984.3px;width:1280px;height:39.7px;background:linear-gradient(#adc5e0,#a8c0dc 30%,#a5bdda);border-top:1px solid #d5e0ec;"></div>
<div class="r" style="left:0px;top:985.3px;width:62px;height:38.7px;background:linear-gradient(90deg,#7b8da8,#8a9db8 85%,rgba(138,157,184,0));"></div>
<div class="r" style="left:1003px;top:985.3px;width:277px;height:38.7px;background:linear-gradient(90deg,rgba(128,146,172,0),#8092ac 35px,#8092ac);"></div>
<div class="r" style="left:8.7px;top:985.7px;width:36.6px;height:36.6px;background:radial-gradient(circle at 50% 78%,#37c5f5 0%,#1b78c2 45%,#123f7d 100%);border-radius:50%;border:1px solid #1a3f70;"></div>
<div class="r" style="left:13px;top:987.5px;width:28px;height:17px;background:rgba(255,255,255,0.28);border-radius:50%;"></div>
<svg class="r" style="left:8px;top:985px;" width="38" height="38" viewBox="0 0 38 38"><path d="M9.5 11.5 C12.5 10 15.5 10 18 11.6 L16.9 18.8 C14.6 17.5 11.8 17.5 8.5 19Z" fill="#e8532b" stroke="#1d2f55" stroke-width="0.5"/><path d="M19.6 12.2 C22.2 13.8 25.2 13.6 28.8 11.8 L27.6 19 C24.6 20.6 21.4 20.6 18.5 19.3Z" fill="#8cc63f" stroke="#1d2f55" stroke-width="0.5"/><path d="M8.3 20.6 C11.4 19.2 14.4 19.3 16.7 20.6 L15.6 27.8 C13 26.4 10.2 26.5 7.2 28Z" fill="#3fa9f5" stroke="#1d2f55" stroke-width="0.5"/><path d="M18.3 21 C21.2 22.4 24.2 22.2 27.4 20.6 L26.3 27.8 C23.2 29.4 20 29.4 17.2 28Z" fill="#fbb03b" stroke="#1d2f55" stroke-width="0.5"/></svg>
<div class="r" style="left:59.5px;top:985px;width:59px;height:38.5px;background:linear-gradient(135deg,#e3ebf4 0%,#c0d1e5 40%,#a9c0da 41%,#b7cbe1 100%);border:1px solid #3e4c61;border-radius:3px;box-shadow:inset 0 0 0 1px rgba(255,255,255,0.55);"></div>
<div class="r" style="left:308.5px;top:985px;width:57.5px;height:38.5px;background:linear-gradient(135deg,#e3ebf4 0%,#c0d1e5 40%,#a9c0da 41%,#b7cbe1 100%);border:1px solid #3e4c61;border-radius:3px;box-shadow:inset 0 0 0 1px rgba(255,255,255,0.55);"></div>
<div class="r" style="left:370px;top:985px;width:58.5px;height:38.5px;background:linear-gradient(135deg,#f1f5fa 0%,#dfe8f2 45%,#cbd9ea 46%,#d5e1ef 100%);border:1px solid #3e4c61;border-radius:3px;box-shadow:inset 0 0 0 1px rgba(255,255,255,0.55);"></div>
<svg class="r" style="left:72.8px;top:987.7px;" width="32" height="32" viewBox="0 0 32 32"><circle cx="16" cy="16" r="15.6" fill="#ffffff"/><circle cx="16" cy="16" r="14.2" fill="#5fae4e"/><path d="M15.6 16.4 L18 0.4 A15.6 15.6 0 0 1 31.5 13 Z" fill="#ffffff"/><circle cx="15.6" cy="16.4" r="6.6" fill="#ffffff"/><circle cx="15.6" cy="16.4" r="4" fill="#5fae4e"/><path d="M17 8.8 L18.2 1.6 Q19.6 1 20.6 2 L19.6 9.4Z" fill="#f26a21"/><path d="M21.8 9.4 L25.6 1.8 L30.6 1.6 L23.8 11Z" fill="#5fae4e"/><path d="M22.8 12.4 L28.6 9.2 Q30 9.6 30 11 L23.6 14.6Z" fill="#f26a21"/></svg>
<svg class="r" style="left:134px;top:988px;" width="34" height="32" viewBox="0 0 34 32"><circle cx="16" cy="15.7" r="14.8" fill="#f7941e"/><circle cx="18.2" cy="15.7" r="14.6" fill="#2c2255"/><path d="M4.6 12.6 H31.6 M4 15.7 H32.4 M4.6 18.8 H31.6" stroke="#ffffff" stroke-width="2.1"/><ellipse cx="18.2" cy="23.8" rx="8" ry="3.6" fill="#473a8e" opacity="0.8"/></svg>
<svg class="r" style="left:197px;top:988px;" width="32" height="32" viewBox="0 0 32 32"><rect x="0" y="0" width="31.8" height="31.5" rx="3" fill="#454545"/><path d="M7.8 12.5 L24 18 V21.5 L7.8 16.2Z" fill="#e58a00"/><path d="M7.8 10.8 L24 5.6 V11 L7.8 16.2Z" fill="#ff9800"/><path d="M24 16.5 V21.8 L7.8 26.6 V21.3Z" fill="#ff9800"/></svg>
<svg class="r" style="left:258px;top:986px;" width="36" height="36" viewBox="0 0 36 36"><rect x="3" y="4" width="23" height="23" fill="none" stroke="#3aa640" stroke-width="2" stroke-dasharray="2 2"/><rect x="0" y="0" width="13" height="17" fill="#a8c0dc"/><rect x="10" y="15" width="26" height="21" fill="#a8c0dc" opacity="0.9"/><path d="M2 4 V14 A4.8 2.2 0 0 0 11.6 14 V4Z" fill="#e8b21e" stroke="#94700a" stroke-width="0.8"/><path d="M4 5 V15.5" stroke="#fbe38a" stroke-width="1.8"/><ellipse cx="6.8" cy="4" rx="4.8" ry="2" fill="#f8dc6e" stroke="#94700a" stroke-width="0.8"/><path d="M14 31.5 L27 18.5" stroke="#c79a3a" stroke-width="2.6"/><path d="M12 31 L14.5 33.5 L22 26 L19.5 23.5Z" fill="#e0a838" stroke="#8a6414" stroke-width="0.6"/><path d="M22 16.5 C25 14 29 15.5 33 21 L30.5 23 C28 20 26 19.5 24.5 20.5Z" fill="#dfe4ea" stroke="#5a6678" stroke-width="0.8"/><path d="M15 19.5 L28.5 33" stroke="#dfe4ea" stroke-width="3"/><path d="M15 19.5 L28.5 33" stroke="#8b95a5" stroke-width="0.9" transform="translate(1.4,-1.4)"/><path d="M12 16.5 A4 4 0 1 0 18.5 20.5 L16 18 L13 19 Z" fill="#dfe4ea" stroke="#5a6678" stroke-width="0.8"/></svg>
<svg class="r" style="left:320.5px;top:987.5px;" width="33" height="33" viewBox="0 0 33 33"><path d="M23.8 1 L31.6 4.2 V28.8 L23.8 32 L10.2 19.8 L4.4 24.6 L1.4 23.2 V9.8 L4.4 8.4 L10.2 13.2Z M23.8 10 L15.8 16.5 L23.8 23Z M4.6 13 V20 L8.2 16.5Z" fill="#68217a" fill-rule="evenodd" stroke="#ffffff" stroke-width="1.5" stroke-linejoin="round"/></svg>
<svg class="r" style="left:384.5px;top:990px;" width="28" height="27" viewBox="0 0 28 27"><rect x="0.5" y="0.5" width="27" height="26" fill="#f4f5f7" stroke="#c9cbd0" stroke-width="0.7" opacity="0.9"/><path d="M6 14 V26.5 M0.5 19.5 H12" stroke="#cfcfd4" stroke-width="0.7"/><rect x="12.5" y="1" width="15" height="14.5" fill="#efb020" stroke="#a8760a" stroke-width="1"/><rect x="14" y="2.5" width="12" height="7" fill="#f9d667" opacity="0.75"/><rect x="1.5" y="7.8" width="9.3" height="10.6" fill="#d8372c" stroke="#8f1810" stroke-width="1"/><rect x="2.8" y="9" width="6.6" height="4" fill="#ee8a82" opacity="0.7"/><rect x="12.5" y="17.5" width="15" height="8.8" fill="#3f86e0" stroke="#2a5fb4" stroke-width="0.8"/><rect x="13.5" y="18.3" width="13" height="3.4" fill="#8fc0f8" opacity="0.75"/></svg>
<span class="t" style="left:1047.3px;top:992.5px;font-size:13px;line-height:17px;color:#ffffff;transform:scaleX(0.8056);">EN</span>
<svg class="r" style="left:1078.5px;top:1002.5px;" width="8.5" height="5" viewBox="0 0 8.5 5"><path d="M0 5 H8.5 L4.25 0Z" fill="#ffffff" stroke="#8b98ac" stroke-width="0.5"/></svg>
<div class="r" style="left:1099px;top:997px;width:16px;height:15.5px;background:#f7d9d9;border:1px solid #e99;box-shadow:inset 0 0 0 1px #fff;"></div>
<span class="t" style="left:1100.6px;top:996px;font-size:15px;line-height:17px;color:#d0181f;font-weight:bold;">V</span>
<svg class="r" style="left:1123px;top:996px;" width="17" height="17" viewBox="0 0 17 17"><path d="M1.5 1 V16" stroke="#ffffff" stroke-width="1.8"/><path d="M3.5 2 C7 0.5 9 4 15.5 3 L13.5 6.2 L15.5 9.5 C9 10.5 7 7 3.5 8.5Z" fill="#ffffff" stroke="#5d6b80" stroke-width="0.7"/></svg>
<svg class="r" style="left:1147px;top:996px;" width="17" height="17" viewBox="0 0 17 17"><rect x="5" y="3.5" width="11" height="9" fill="#7c8ea8" stroke="#ffffff" stroke-width="1.6"/><path d="M7.5 15.5 H13.5 M10.5 12.5 V15.5" stroke="#ffffff" stroke-width="1.5"/><path d="M3 0.5 V5 M1.2 2 V6.5 H5 V2 M3 6.5 V15.5 H6.5" fill="none" stroke="#ffffff" stroke-width="1.3"/></svg>
<svg class="r" style="left:1171px;top:996px;" width="16" height="17" viewBox="0 0 16 17"><path d="M0.8 6 H3.8 L8 2 V15 L3.8 11 H0.8Z" fill="#ffffff" stroke="#5d6b80" stroke-width="0.6"/><path d="M10 5.8 A3.5 3.5 0 0 1 10 11.2 M11.8 3.6 A6 6 0 0 1 11.8 13.4 M13.6 1.6 A8.5 8.5 0 0 1 13.6 15.4" fill="none" stroke="#ffffff" stroke-width="1.1"/></svg>
<span class="t" style="left:1205.2px;top:988.5px;font-size:13px;line-height:17px;color:#ffffff;transform:scaleX(0.8773);">10:07 PM</span>
<span class="t" style="left:1200.4px;top:1005px;font-size:13px;line-height:17px;color:#ffffff;transform:scaleX(0.9092);">11/20/2018</span>
<div class="r" style="left:1266px;top:985.5px;width:14px;height:38.5px;background:linear-gradient(90deg,#6f7f97,#8d9db5 40%,#7c8ea8);border-left:1px solid #4a586d;box-shadow:inset 1px 1px 0 rgba(255,255,255,0.35);"></div>
<div class="r" style="left:200px;top:200px;width:364.5px;height:381px;background:#111111;border-radius:7px 7px 1px 1px;"></div>
<div class="r" style="left:201px;top:201px;width:362.5px;height:379px;background:linear-gradient(#bccbdb 0px,#cad8e6 16px,#d7e4f2 29px,#d7e4f2 100%);border-radius:6px 6px 0 0;box-shadow:inset 0 0 0 1px rgba(255,255,255,0.85);"></div>
<svg class="r" style="left:211.2px;top:211.2px;" width="14" height="14" viewBox="0 0 14 14"><rect x="0.5" y="0.5" width="13" height="13" fill="#dfe3ea" stroke="#b9b4ae" stroke-width="0.8" opacity="0.9"/><path d="M4.6 0.5 V13.5 M0.5 10.3 H13.5 M11.8 8 V13.5" stroke="#c9c4be" stroke-width="0.6"/><rect x="6.3" y="1.3" width="6.2" height="6" fill="#f4be2c" stroke="#a87a00" stroke-width="0.9"/><rect x="7.4" y="2.3" width="3.6" height="3.2" fill="#fde28a"/><rect x="1.2" y="5.2" width="3.4" height="4.4" fill="#d9291c" stroke="#8c120a" stroke-width="0.8"/><rect x="6.2" y="9.2" width="4.6" height="3.3" fill="#4d8fe6" stroke="#2f66c0" stroke-width="0.5"/></svg>
<span class="t" style="left:229.9px;top:211px;font-size:12.5px;line-height:16px;color:#4a4a62;transform:scaleX(0.9135);">Form1</span>
<div class="r" style="left:457.5px;top:210px;width:30.5px;height:17px;background:linear-gradient(#c6d3e2,#d0dcea);border:1px solid #8c9ab8;border-radius:3px;box-shadow:inset 0 0 0 1px rgba(255,255,255,0.35);"></div>
<svg class="r" style="left:467.25px;top:218px;" width="11" height="5" viewBox="0 0 11 5"><rect x="0.6" y="0.6" width="9.8" height="3.4" rx="0.8" fill="#f4f4f4" stroke="#5a5e78" stroke-width="1"/></svg>
<div class="r" style="left:490.5px;top:210px;width:30.5px;height:17px;background:linear-gradient(#c6d3e2,#d0dcea);border:1px solid #8c9ab8;border-radius:3px;box-shadow:inset 0 0 0 1px rgba(255,255,255,0.35);"></div>
<svg class="r" style="left:500.25px;top:214px;" width="11" height="9" viewBox="0 0 11 9"><rect x="0.6" y="0.6" width="9.8" height="7.8" rx="0.8" fill="#f4f4f4" stroke="#5a5e78" stroke-width="1"/><rect x="3.4" y="3.1" width="4.2" height="2.4" fill="#9fb3cf" stroke="#5a5e78" stroke-width="0.9"/></svg>
<div class="r" style="left:523.5px;top:210px;width:30.5px;height:17px;background:linear-gradient(#c6d3e2,#d0dcea);border:1px solid #8c9ab8;border-radius:3px;box-shadow:inset 0 0 0 1px rgba(255,255,255,0.35);"></div>
<svg class="r" style="left:532.75px;top:213.5px;" width="12" height="10" viewBox="0 0 12 10"><path d="M0.8 1 L4 1 L6 3.2 L8 1 L11.2 1 L7.9 4.8 L11.2 8.8 L8 8.8 L6 6.5 L4 8.8 L0.8 8.8 L4.1 4.8 Z" fill="#fbfbfb" stroke="#5a5e78" stroke-width="1" stroke-linejoin="round"/></svg>
<div class="r" style="left:208px;top:230px;width:348.2px;height:342px;background:#f0f0f0;"></div>
<span class="t" style="left:241.6px;top:281.5px;font-size:11px;line-height:14px;color:#000000;transform:scaleX(1.0032);">Họ Tên:</span>
<span class="t" style="left:240.6px;top:321px;font-size:11px;line-height:14px;color:#000000;transform:scaleX(0.9745);">Quê Quán:</span>
<span class="t" style="left:242.1px;top:372px;font-size:11px;line-height:14px;color:#000000;transform:scaleX(0.9028);">Trường:</span>
<div class="r" style="left:323px;top:279px;width:100px;height:20px;background:#ffffff;border:1px solid #e3e9ef;border-top-color:#abadb3;border-left-color:#e2e3ea;border-right-color:#dbdfe6;"></div>
<span class="t" style="left:326.1px;top:282px;font-size:11px;line-height:14px;color:#000000;transform:scaleX(0.9014);">Min</span>
<div class="r" style="left:323px;top:317.5px;width:100px;height:20px;background:#ffffff;border:1px solid #e3e9ef;border-top-color:#abadb3;border-left-color:#e2e3ea;border-right-color:#dbdfe6;"></div>
<span class="t" style="left:326.1px;top:320.5px;font-size:11px;line-height:14px;color:#000000;transform:scaleX(0.9231);">Thái Bình</span>
<div class="r" style="left:323px;top:365px;width:100px;height:20px;background:#ffffff;border:1px solid #e3e9ef;border-top-color:#abadb3;border-left-color:#e2e3ea;border-right-color:#dbdfe6;"></div>
<span class="t" style="left:326.1px;top:368px;font-size:11px;line-height:14px;color:#000000;transform:scaleX(0.9677);">CANTHO</span>
<div class="r" style="left:324px;top:417px;width:98px;height:21px;background:linear-gradient(#f2f2f2 0%,#ebebeb 48%,#dddddd 52%,#cfcfcf 100%);border:1px solid #3c7fb1;border-radius:3px;box-shadow:inset 0 0 0 1px #48d8fb66, inset 0 0 0 2px rgba(255,255,255,0.6);"></div>
<span class="t" style="left:352.6px;top:420.5px;font-size:11px;line-height:14px;color:#000000;transform:scaleX(0.9434);">Process</span>
<div class="r" style="left:208px;top:462px;width:348px;height:110.3px;background:#ffffff;border:1px solid #828790;"></div>
<div class="r" style="left:209px;top:463px;width:346px;height:24px;background:linear-gradient(#ffffff 0%,#ffffff 40%,#f3f4f5 60%,#eff0f1 100%);border-bottom:1px solid #d5d5d5;"></div>
<div class="r" style="left:329.5px;top:463px;width:1px;height:23px;background:#dedfe0;"></div>
<div class="r" style="left:330.2px;top:488px;width:1px;height:67px;background:#ececec;"></div>
<div class="r" style="left:449.5px;top:463px;width:1px;height:23px;background:#dedfe0;"></div>
<div class="r" style="left:450.2px;top:488px;width:1px;height:67px;background:#ececec;"></div>
<div class="r" style="left:209px;top:504px;width:346px;height:1px;background:#ececec;"></div>
<div class="r" style="left:209px;top:521px;width:346px;height:1px;background:#ececec;"></div>
<div class="r" style="left:209px;top:538px;width:346px;height:1px;background:#ececec;"></div>
<span class="t" style="left:215.9px;top:469px;font-size:11px;line-height:14px;color:#000000;transform:scaleX(0.9756);">Họ Tên</span>
<span class="t" style="left:336.1px;top:469px;font-size:11px;line-height:14px;color:#000000;transform:scaleX(0.8980);">Trường</span>
<span class="t" style="left:455.6px;top:469px;font-size:11px;line-height:14px;color:#000000;transform:scaleX(0.9557);">Quê Quán</span>
<span class="t" style="left:215.9px;top:489.5px;font-size:11px;line-height:14px;color:#000000;transform:scaleX(0.9014);">Min</span>
<span class="t" style="left:335.1px;top:489.5px;font-size:11px;line-height:14px;color:#000000;transform:scaleX(0.9677);">CANTHO</span>
<span class="t" style="left:455.6px;top:489.5px;font-size:11px;line-height:14px;color:#000000;transform:scaleX(0.9337);">Thái Bình</span>
<div class="r" style="left:209px;top:555px;width:346px;height:16.3px;background:linear-gradient(#e3e3e3,#f0f0f0 30%,#f0f0f0 70%,#e9e9e9);"></div>
<svg class="r" style="left:216px;top:558.5px;" width="5" height="8" viewBox="0 0 5 8"><path d="M4.6 0 V8 L0.2 4Z" fill="#3b3b3b"/></svg>
<svg class="r" style="left:543px;top:558.5px;" width="5" height="8" viewBox="0 0 5 8"><path d="M0.4 0 V8 L4.8 4Z" fill="#3b3b3b"/></svg>
<div class="r" style="left:228.5px;top:555.3px;width:293.5px;height:15.6px;background:linear-gradient(#f6f6f6 0%,#ebebeb 45%,#d9d9d9 50%,#cfcfcf 100%);border:1px solid #979797;border-radius:2px;box-shadow:inset 0 0 0 1px rgba(255,255,255,0.7);"></div>
<div class="r" style="left:370.5px;top:559.5px;width:1.3px;height:7px;background:#6b6b6b;"></div>
<div class="r" style="left:373.5px;top:559.5px;width:1.3px;height:7px;background:#6b6b6b;"></div>
<div class="r" style="left:376.5px;top:559.5px;width:1.3px;height:7px;background:#6b6b6b;"></div>
<div class="r" style="left:616px;top:241px;width:300px;height:300px;background:#111111;border-radius:7px 7px 1px 1px;"></div>
<div class="r" style="left:617px;top:242px;width:298px;height:298px;background:linear-gradient(#99b4d1 0px,#a9c4e0 16px,#b9d1ea 29px,#b9d1ea 100%);border-radius:6px 6px 0 0;box-shadow:inset 0 0 0 1px rgba(255,255,255,0.95);"></div>
<svg class="r" style="left:627.2px;top:252.2px;" width="14" height="14" viewBox="0 0 14 14"><rect x="0.5" y="0.5" width="13" height="13" fill="#dfe3ea" stroke="#b9b4ae" stroke-width="0.8" opacity="0.9"/><path d="M4.6 0.5 V13.5 M0.5 10.3 H13.5 M11.8 8 V13.5" stroke="#c9c4be" stroke-width="0.6"/><rect x="6.3" y="1.3" width="6.2" height="6" fill="#f4be2c" stroke="#a87a00" stroke-width="0.9"/><rect x="7.4" y="2.3" width="3.6" height="3.2" fill="#fde28a"/><rect x="1.2" y="5.2" width="3.4" height="4.4" fill="#d9291c" stroke="#8c120a" stroke-width="0.8"/><rect x="6.2" y="9.2" width="4.6" height="3.3" fill="#4d8fe6" stroke="#2f66c0" stroke-width="0.5"/></svg>
<span class="t" style="left:645.9px;top:252px;font-size:12.5px;line-height:16px;color:#000000;transform:scaleX(0.9135);">Form2</span>
<div class="r" style="left:809px;top:251px;width:30.5px;height:17px;background:linear-gradient(#bdd2ea 0%,#b3cbe5 45%,#98b2cf 50%,#a9c3de 100%);border:1px solid #55647e;border-radius:3px;box-shadow:inset 0 0 0 1px rgba(255,255,255,0.55);"></div>
<svg class="r" style="left:818.75px;top:259px;" width="11" height="5" viewBox="0 0 11 5"><rect x="0.6" y="0.6" width="9.8" height="3.4" rx="0.8" fill="#f4f4f4" stroke="#4a4a5e" stroke-width="1"/></svg>
<div class="r" style="left:842px;top:251px;width:30.5px;height:17px;background:linear-gradient(#bdd2ea 0%,#b3cbe5 45%,#98b2cf 50%,#a9c3de 100%);border:1px solid #55647e;border-radius:3px;box-shadow:inset 0 0 0 1px rgba(255,255,255,0.55);"></div>
<svg class="r" style="left:851.75px;top:255px;" width="11" height="9" viewBox="0 0 11 9"><rect x="0.6" y="0.6" width="9.8" height="7.8" rx="0.8" fill="#f4f4f4" stroke="#4a4a5e" stroke-width="1"/><rect x="3.4" y="3.1" width="4.2" height="2.4" fill="#9fb3cf" stroke="#4a4a5e" stroke-width="0.9"/></svg>
<div class="r" style="left:875px;top:251px;width:30.5px;height:17px;background:linear-gradient(#e7aa9f 0%,#d67c6b 45%,#c13f26 50%,#cc6650 100%);border:1px solid #4d1a1f;border-radius:3px;box-shadow:inset 0 0 0 1px rgba(255,255,255,0.55);"></div>
<svg class="r" style="left:884.25px;top:254.5px;" width="12" height="10" viewBox="0 0 12 10"><path d="M0.8 1 L4 1 L6 3.2 L8 1 L11.2 1 L7.9 4.8 L11.2 8.8 L8 8.8 L6 6.5 L4 8.8 L0.8 8.8 L4.1 4.8 Z" fill="#fbfbfb" stroke="#4a4a5e" stroke-width="1" stroke-linejoin="round"/></svg>
<div class="r" style="left:624px;top:271px;width:283.7px;height:261px;background:#f0f0f0;"></div>
<span class="t" style="left:659.6px;top:319px;font-size:11px;line-height:14px;color:#000000;transform:scaleX(1.0032);">Họ Tên:</span>
<span class="t" style="left:658.6px;top:366.5px;font-size:11px;line-height:14px;color:#000000;transform:scaleX(0.9745);">Quê Quán:</span>
<span class="t" style="left:660.1px;top:430px;font-size:11px;line-height:14px;color:#000000;transform:scaleX(0.9028);">Trường:</span>
<div class="r" style="left:741px;top:319px;width:100px;height:19.5px;background:#ffffff;border:1px solid #e3e9ef;border-top-color:#abadb3;border-left-color:#e2e3ea;border-right-color:#dbdfe6;"></div>
<span class="t" style="left:744.1px;top:322px;font-size:11px;line-height:14px;color:#000000;transform:scaleX(0.9936);">Anh</span>
<div class="r" style="left:741px;top:366px;width:100px;height:19.5px;background:#ffffff;border:1px solid #e3e9ef;border-top-color:#abadb3;border-left-color:#e2e3ea;border-right-color:#dbdfe6;"></div>
<span class="t" style="left:744.1px;top:369px;font-size:11px;line-height:14px;color:#000000;transform:scaleX(0.9740);">Cà Mau</span>
<div class="r" style="left:741px;top:414px;width:100px;height:19.5px;background:#ffffff;border:1px solid #8fb8dc;border-top-color:#3d7bad;"></div>
<span class="t" style="left:744.1px;top:417px;font-size:11px;line-height:14px;color:#000000;transform:scaleX(0.9514);">Can THO</span>
<div class="r" style="left:789.3px;top:417.5px;width:1px;height:13px;background:#000;"></div>
<div class="r" style="left:646.5px;top:480px;width:97.5px;height:20.7px;background:linear-gradient(#f2f2f2 0%,#ebebeb 48%,#dddddd 52%,#cfcfcf 100%);border:1px solid #707070;border-radius:3px;box-shadow:inset 0 0 0 1px rgba(255,255,255,0.8);"></div>
<span class="t" style="left:684.9px;top:483.35px;font-size:11px;line-height:14px;color:#000000;transform:scaleX(0.8862);">Sửa</span>
<div class="r" style="left:770px;top:480px;width:98px;height:20.7px;background:linear-gradient(#f2f2f2 0%,#ebebeb 48%,#dddddd 52%,#cfcfcf 100%);border:1px solid #707070;border-radius:3px;box-shadow:inset 0 0 0 1px rgba(255,255,255,0.8);"></div>
<span class="t" style="left:804.4px;top:483.35px;font-size:11px;line-height:14px;color:#000000;transform:scaleX(0.9714);">Đóng</span>
<div class="r" style="left:618px;top:300px;width:6px;height:61px;background:linear-gradient(rgba(255,255,255,0),rgba(255,255,255,0.55));"></div>
<div class="r" style="left:908.3px;top:300px;width:5.7px;height:61px;background:linear-gradient(rgba(255,255,255,0),rgba(255,255,255,0.55));"></div>
<div class="r" style="left:914px;top:252px;width:1px;height:287px;background:#6fd0f2;"></div>
<div class="r" style="left:618px;top:539px;width:297px;height:1px;background:#6fd0f2;"></div>
<svg class="r" style="left:897px;top:522px;" width="10" height="10" viewBox="0 0 10 10"><g fill="#b8b8b8"><rect x="7" y="1" width="2" height="2"/><rect x="4" y="4" width="2" height="2"/><rect x="7" y="4" width="2" height="2"/><rect x="1" y="7" width="2" height="2"/><rect x="4" y="7" width="2" height="2"/><rect x="7" y="7" width="2" height="2"/></g></svg>
<div class="r" style="left:640.8px;top:474px;width:110.2px;height:31.7px;background:transparent;border:4px solid #ed1c24;"></div>
<span class="t" style="left:97.6px;top:630px;font-size:14px;line-height:18px;color:#a9d1f5;transform:scaleX(0.9458);">khi Nhấn vào nút sửa á, Thì Từ Dữ Liệu Từ cái Form đÃ SỬA , sẽ được cộng dồng hiển thị ở dưới hàng</span>
<span class="t" style="left:97.6px;top:648px;font-size:14px;line-height:18px;color:#a9d1f5;transform:scaleX(0.9510);">Tiếp theo của Listview( ở Đây hàng kế tiếp là 2). Vậy Làm sao ạ??????</span>
<span class="t" style="left:97.6px;top:666px;font-size:14px;line-height:18px;color:#22b14c;transform:scaleX(0.9239);">Và Làm sao để  3 TEXTBOX ở form Gốc Là Form 1 cũng gán  lại  các giá trị Tương Ung với forrm  đã</span>
<span class="t" style="left:97.6px;top:684px;font-size:14px;line-height:18px;color:#22b14c;transform:scaleX(0.9297);">được sửa( có nghĩa  Form 1:</span>
<span class="t" style="left:97.6px;top:702px;font-size:14px;line-height:18px;color:#22b14c;transform:scaleX(0.9664);">Họ Tên:Anh</span>
<span class="t" style="left:97.6px;top:720px;font-size:14px;line-height:18px;color:#22b14c;transform:scaleX(0.9354);">QQ:ca mau</span>
<span class="t" style="left:97.6px;top:738px;font-size:14px;line-height:18px;color:#22b14c;transform:scaleX(1.0056);">truong:can tho</span>
<span class="t" style="left:97.6px;top:756px;font-size:14px;line-height:18px;color:#22b14c;">)</span>
</body></html>
